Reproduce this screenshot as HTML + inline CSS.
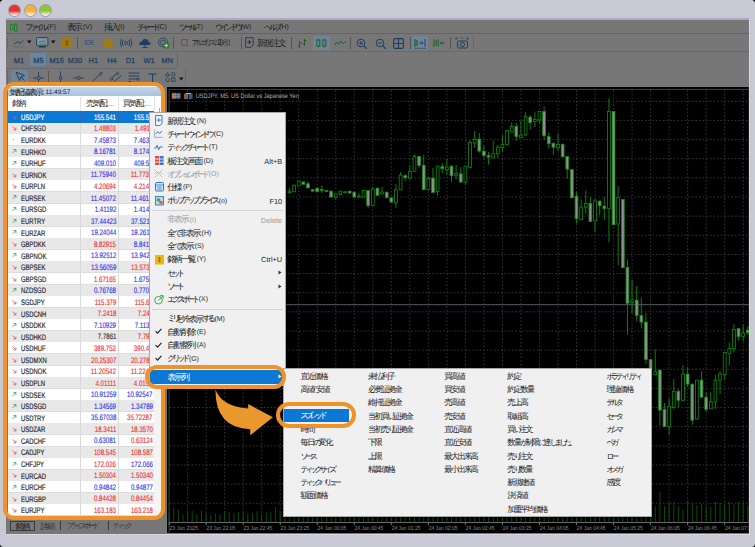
<!DOCTYPE html>
<html><head><meta charset="utf-8"><title>MT5</title>
<style>
html,body{margin:0;padding:0;}
body{width:755px;height:547px;overflow:hidden;position:relative;background:#000;font-family:"Liberation Sans",sans-serif;}
.r{position:absolute;}
.t{position:absolute;white-space:nowrap;line-height:1.2;text-rendering:geometricPrecision;font-family:"Liberation Sans",sans-serif;}
i.j{font-style:normal;display:inline-block;line-height:0;vertical-align:-0.1em;font-size:1.25em;width:0.8em;text-align:center;-webkit-text-stroke:0.05px currentColor;}
i.k{font-style:normal;display:inline-block;line-height:0;vertical-align:-0.1em;font-size:1.2em;width:0.6em;text-align:center;overflow:visible;-webkit-text-stroke:0.05px currentColor;}
svg{overflow:visible;}
text{text-rendering:geometricPrecision;}
</style></head><body>
<div class="r" style="left:0;top:0;width:755px;height:547px;background:#c9c9d6;border-radius:3.5px;"></div>
<div class="r" style="left:7.9px;top:3.9px;width:11px;height:11px;border-radius:50%;border:0.6px solid #9a9aa8;background:linear-gradient(#e8332e 0%, #e8332e 52%, #f6eee8 92%);"></div>
<div class="r" style="left:23.6px;top:3.9px;width:11px;height:11px;border-radius:50%;border:0.6px solid #9a9aa8;background:linear-gradient(#f4b030 0%, #f4b030 52%, #f6eee8 92%);"></div>
<div class="r" style="left:39.1px;top:3.9px;width:11px;height:11px;border-radius:50%;border:0.6px solid #9a9aa8;background:linear-gradient(#8cc63a 0%, #8cc63a 52%, #f6eee8 92%);"></div>
<div class="r" style="left:6px;top:18px;width:743px;height:2.2px;background:#aaaac2;"></div>
<div class="r" style="left:6px;top:20px;width:744.2px;height:515px;background:#d9d9e5;"></div>
<div class="r" style="left:6px;top:20px;width:743px;height:513.8px;background:#777777;"></div>
<div class="r" style="left:6px;top:33px;width:743px;height:0.8px;background:#636363;"></div>
<svg class="r" style="left:9px;top:21.5px" width="10" height="10" viewBox="0 0 10 10"><rect x="1.5" y="2.8" width="2.4" height="4.6" fill="#6a8a6a" stroke="#1a8a1a" stroke-width="1"/><path d="M2.7 1.7V2.8M2.7 7.4V8.6" stroke="#1a8a1a" stroke-width="0.9"/><rect x="5.5" y="2.8" width="2.4" height="6.3" fill="#6a8a6a" stroke="#1e7a2a" stroke-width="1"/><path d="M6.7 0.6V2.8M6.7 9.1V9.6" stroke="#1e7a2a" stroke-width="0.9"/></svg>
<div class="t " style="left:25px;top:24.03px;font-size:7.0px;color:#1e1e1e;"><i class="k">フ</i><i class="k">ァ</i><i class="k">イ</i><i class="k">ル</i> (F)</div>
<div class="t " style="left:67px;top:24.03px;font-size:7.0px;color:#1e1e1e;"><i class="j">表</i><i class="j">示</i> (V)</div>
<div class="t " style="left:104px;top:24.03px;font-size:7.0px;color:#1e1e1e;"><i class="j">挿</i><i class="j">入</i>(I)</div>
<div class="t " style="left:137px;top:24.03px;font-size:7.0px;color:#1e1e1e;"><i class="k">チ</i><i class="k">ャ</i><i class="k">ー</i><i class="k">ト</i>(C)</div>
<div class="t " style="left:179px;top:24.03px;font-size:7.0px;color:#1e1e1e;"><i class="k">ツ</i><i class="k">ー</i><i class="k">ル</i>(T)</div>
<div class="t " style="left:215px;top:24.03px;font-size:7.0px;color:#1e1e1e;"><i class="k">ウ</i><i class="k">イ</i><i class="k">ン</i><i class="k">ド</i><i class="k">ウ</i>(W)</div>
<div class="t " style="left:264px;top:24.03px;font-size:7.0px;color:#1e1e1e;"><i class="k">ヘ</i><i class="k">ル</i><i class="k">プ</i>(H)</div>
<div class="r" style="left:6px;top:50.5px;width:743px;height:0.8px;background:#6a6a6a;"></div>
<div class="r" style="left:6px;top:68px;width:171px;height:0.8px;background:#6a6a6a;"></div>
<div class="r" style="left:177px;top:51px;width:0.8px;height:17px;background:#6a6a6a;"></div>
<div class="r" style="left:185.3px;top:68.5px;width:0.8px;height:17px;background:#6a6a6a;"></div>
<div class="r" style="left:7.3px;top:37px;width:1px;height:0.8px;background:#5a5a5a;"></div>
<div class="r" style="left:7.3px;top:39px;width:1px;height:0.8px;background:#5a5a5a;"></div>
<div class="r" style="left:7.3px;top:41px;width:1px;height:0.8px;background:#5a5a5a;"></div>
<div class="r" style="left:7.3px;top:43px;width:1px;height:0.8px;background:#5a5a5a;"></div>
<div class="r" style="left:7.3px;top:45px;width:1px;height:0.8px;background:#5a5a5a;"></div>
<div class="r" style="left:7.3px;top:47px;width:1px;height:0.8px;background:#5a5a5a;"></div>
<svg class="r" style="left:13px;top:37px" width="11" height="11" viewBox="0 0 11 11"><path d="M1 1V10H10" fill="none" stroke="#666" stroke-width="0.8"/><path d="M2 7L4.5 4.5L7 6.5L10 3.5" fill="none" stroke="#1b3f63" stroke-width="1"/></svg>
<svg class="r" style="left:27px;top:40px" width="5" height="4" viewBox="0 0 5 4"><path d="M0 0.5H4.5L2.25 3.5Z" fill="#111"/></svg>
<svg class="r" style="left:35.5px;top:37px" width="12.5" height="11" viewBox="0 0 12.5 11"><rect x="0.6" y="0.6" width="11.3" height="8.3" rx="1" fill="#8596a6" stroke="#1b3f63" stroke-width="1"/><rect x="3" y="9" width="6.5" height="1.6" fill="#1b3f63"/><path d="M2.5 6L5 4L7 5L10 2.5" fill="none" stroke="#3b7a3b" stroke-width="0.8"/><path d="M3 8V7M5 8V6M7 8V6.5M9 8V5.5" stroke="#2f7a2f" stroke-width="0.9"/></svg>
<svg class="r" style="left:51px;top:40px" width="5" height="4" viewBox="0 0 5 4"><path d="M0 0.5H4.5L2.25 3.5Z" fill="#111"/></svg>
<svg class="r" style="left:62px;top:37.8px" width="10.5" height="9.8" viewBox="0 0 10.5 9.8"><rect x="0" y="0" width="10.2" height="9.6" rx="1.2" fill="#a07a10"/><path d="M5 2V8M3.5 3.5H6.5M3.5 6H6.5" stroke="#6a5008" stroke-width="0.8"/></svg>
<div class="r" style="left:77.3px;top:37px;width:0.8px;height:12px;background:#555;"></div>
<div class="t" style="left:84px;top:39px;font-size:7.4px;color:#2a5580;letter-spacing:-0.5px;transform:scaleX(0.9);transform-origin:0 0">IDE</div>
<svg class="r" style="left:103px;top:37px" width="10" height="11" viewBox="0 0 10 11"><path d="M3 4Q3 0.8 5 0.8Q7 0.8 7 4" fill="none" stroke="#a07a10" stroke-width="0.9"/><path d="M0.8 3.5H9.2L9.8 10.5H0.2Z" fill="#a07a10"/></svg>
<svg class="r" style="left:120px;top:38px" width="12" height="10" viewBox="0 0 12 10"><circle cx="6" cy="5" r="1.5" fill="none" stroke="#1b3f63" stroke-width="0.9"/><path d="M3.2 2Q1.5 5 3.2 8M8.8 2Q10.5 5 8.8 8M1.5 0.8Q-0.8 5 1.5 9.2M10.5 0.8Q12.8 5 10.5 9.2" fill="none" stroke="#1b3f63" stroke-width="0.9"/></svg>
<svg class="r" style="left:139px;top:37.5px" width="12" height="11" viewBox="0 0 12 11"><path d="M2.5 7Q0 7 0.5 5Q1 3.5 2.8 3.8Q3.5 0.8 6.5 1Q9.2 1.2 9.5 4Q11.8 4.2 11.5 6Q11.2 7 9.5 7Z" fill="#1b3f63"/><path d="M6 7V10M3.5 9.5H8.5" stroke="#1b3f63" stroke-width="0.9"/></svg>
<svg class="r" style="left:158px;top:37px" width="12" height="12" viewBox="0 0 12 12"><circle cx="5" cy="5.5" r="4.5" fill="none" stroke="#1b3f63" stroke-width="0.8"/><circle cx="5" cy="5.5" r="2.5" fill="none" stroke="#1b3f63" stroke-width="0.8"/><circle cx="8.3" cy="8.5" r="3.2" fill="#2f7a3a"/><path d="M8.3 6.7V10.3M6.5 8.5H10.1" stroke="#c8e0c8" stroke-width="0.9"/></svg>
<div class="r" style="left:173.3px;top:37px;width:0.8px;height:12px;background:#555;"></div>
<svg class="r" style="left:180.5px;top:39.2px" width="7" height="7" viewBox="0 0 7 7"><rect x="0.6" y="0.6" width="5.6" height="5.8" fill="none" stroke="#8a4530" stroke-width="1"/></svg>
<div class="t " style="left:191.8px;top:40.61px;font-size:6.0px;color:#262626;"><i class="k">ア</i><i class="k">ル</i><i class="k">ゴ</i><i class="k">リ</i><i class="k">ズ</i><i class="k">ム</i><i class="j">取</i><i class="j">引</i></div>
<div class="r" style="left:240.5px;top:37px;width:0.8px;height:12px;background:#555;"></div>
<svg class="r" style="left:245px;top:37.3px" width="9" height="11" viewBox="0 0 9 11"><path d="M0.6 0.6H8.2V8L6 10.4H0.6Z" fill="none" stroke="#1b3f63" stroke-width="0.9"/><path d="M4.4 3V7M2.4 5H6.4" stroke="#222" stroke-width="0.8"/></svg>
<div class="t " style="left:257px;top:40.03px;font-size:7.0px;color:#262626;"><i class="j">新</i><i class="j">規</i><i class="j">注</i><i class="j">文</i></div>
<div class="r" style="left:290.5px;top:37px;width:0.8px;height:12px;background:#555;"></div>
<svg class="r" style="left:297px;top:37.5px" width="10" height="11" viewBox="0 0 10 11"><path d="M2.5 3V10M0.5 8H2.5M2.5 5H4.5M7.5 1V8M5.5 6H7.5M7.5 2.5H9.5" stroke="#1c6224" stroke-width="1"/></svg>
<div class="r" style="left:313px;top:36px;width:17px;height:14px;background:#6f8497;border-radius:1px;"></div>
<svg class="r" style="left:315px;top:38px" width="13" height="10" viewBox="0 0 13 10"><rect x="1.8" y="2" width="3" height="6" fill="none" stroke="#1c6224" stroke-width="1"/><rect x="7.8" y="2" width="3" height="6" fill="none" stroke="#1c6224" stroke-width="1"/><path d="M3.3 0.5V2M3.3 8V9.5M9.3 0.5V2M9.3 8V9.5" stroke="#1c6224" stroke-width="0.9"/></svg>
<svg class="r" style="left:334px;top:39px" width="12" height="8" viewBox="0 0 12 8"><path d="M0.5 6L2.5 3L4.5 5.5L6.5 2L8.5 4.5L11.5 3" fill="none" stroke="#1c6224" stroke-width="1"/></svg>
<div class="r" style="left:349.8px;top:37px;width:0.8px;height:12px;background:#555;"></div>
<svg class="r" style="left:355.5px;top:37.5px" width="12" height="12" viewBox="0 0 12 12"><circle cx="5" cy="5" r="3.8" fill="none" stroke="#1b3f63" stroke-width="1"/><path d="M7.8 7.8L10.8 10.8" stroke="#1b3f63" stroke-width="1.2"/><path d="M3 5H7" stroke="#1b3f63" stroke-width="0.9"/><path d="M5 3V7" stroke="#1b3f63" stroke-width="0.9"/></svg>
<svg class="r" style="left:374.5px;top:37.5px" width="12" height="12" viewBox="0 0 12 12"><circle cx="5" cy="5" r="3.8" fill="none" stroke="#1b3f63" stroke-width="1"/><path d="M7.8 7.8L10.8 10.8" stroke="#1b3f63" stroke-width="1.2"/><path d="M3 5H7" stroke="#1b3f63" stroke-width="0.9"/></svg>
<svg class="r" style="left:393px;top:37.5px" width="11" height="11" viewBox="0 0 11 11"><rect x="0.6" y="0.6" width="9.8" height="9.8" rx="1.5" fill="none" stroke="#1b3f63" stroke-width="1.1"/><path d="M5.5 0.6V10.4M0.6 5.5H10.4" stroke="#1b3f63" stroke-width="1.1"/></svg>
<div class="r" style="left:409.8px;top:37px;width:0.8px;height:12px;background:#555;"></div>
<div class="r" style="left:411.5px;top:36px;width:16px;height:14px;background:#6f8497;border-radius:1px;"></div>
<svg class="r" style="left:412.5px;top:37.5px" width="14" height="11" viewBox="0 0 14 11"><path d="M2 1V9M4 2V8" stroke="#1c6224" stroke-width="1.2"/><path d="M6 5H10M8.5 3.5L10 5L8.5 6.5M12 1V9" fill="none" stroke="#1b3f63" stroke-width="0.9"/><path d="M1 10.3H13" stroke="#1b3f63" stroke-width="0.6"/></svg>
<svg class="r" style="left:432px;top:37.5px" width="14" height="11" viewBox="0 0 14 11"><path d="M2 1V9M4.2 2V8M6.2 1.5V8.5" stroke="#1c6224" stroke-width="1"/><path d="M12.5 5H8.5M10 3.5L8.5 5L10 6.5" fill="none" stroke="#1b3f63" stroke-width="0.9"/></svg>
<div class="r" style="left:449.5px;top:37px;width:0.8px;height:12px;background:#555;"></div>
<svg class="r" style="left:455px;top:37px" width="15" height="12" viewBox="0 0 15 12"><path d="M1 3V1H3M6 1H8M11 1H13V3" fill="none" stroke="#1b3f63" stroke-width="0.8"/><rect x="2.5" y="4" width="10" height="7" rx="1.2" fill="none" stroke="#1b3f63" stroke-width="1"/><circle cx="7.5" cy="7.5" r="2" fill="none" stroke="#1b3f63" stroke-width="1"/></svg>
<div class="r" style="left:473px;top:35px;width:0.8px;height:15px;background:#6a6a6a;"></div>
<div class="r" style="left:29px;top:52.3px;width:17.5px;height:15px;background:#71859a;border-radius:2px;border:0.6px solid #62778e;box-sizing:border-box;"></div>
<div class="t" style="left:4px;width:30px;text-align:center;top:56.5px;font-size:7.4px;color:#1b3f63;-webkit-text-stroke:0.25px #1b3f63">M1</div>
<div class="t" style="left:23.4px;width:30px;text-align:center;top:56.5px;font-size:7.4px;color:#1b3f63;-webkit-text-stroke:0.25px #1b3f63">M5</div>
<div class="t" style="left:41.6px;width:30px;text-align:center;top:56.5px;font-size:7.4px;color:#1b3f63;-webkit-text-stroke:0.25px #1b3f63">M15</div>
<div class="t" style="left:60px;width:30px;text-align:center;top:56.5px;font-size:7.4px;color:#1b3f63;-webkit-text-stroke:0.25px #1b3f63">M30</div>
<div class="t" style="left:78.3px;width:30px;text-align:center;top:56.5px;font-size:7.4px;color:#1b3f63;-webkit-text-stroke:0.25px #1b3f63">H1</div>
<div class="t" style="left:97px;width:30px;text-align:center;top:56.5px;font-size:7.4px;color:#1b3f63;-webkit-text-stroke:0.25px #1b3f63">H4</div>
<div class="t" style="left:115.4px;width:30px;text-align:center;top:56.5px;font-size:7.4px;color:#1b3f63;-webkit-text-stroke:0.25px #1b3f63">D1</div>
<div class="t" style="left:134px;width:30px;text-align:center;top:56.5px;font-size:7.4px;color:#1b3f63;-webkit-text-stroke:0.25px #1b3f63">W1</div>
<div class="t" style="left:152.3px;width:30px;text-align:center;top:56.5px;font-size:7.4px;color:#1b3f63;-webkit-text-stroke:0.25px #1b3f63">MN</div>
<div class="r" style="left:7.3px;top:71px;width:1px;height:0.8px;background:#5a5a5a;"></div>
<div class="r" style="left:7.3px;top:73px;width:1px;height:0.8px;background:#5a5a5a;"></div>
<div class="r" style="left:7.3px;top:75px;width:1px;height:0.8px;background:#5a5a5a;"></div>
<div class="r" style="left:7.3px;top:77px;width:1px;height:0.8px;background:#5a5a5a;"></div>
<div class="r" style="left:7.3px;top:79px;width:1px;height:0.8px;background:#5a5a5a;"></div>
<div class="r" style="left:7.3px;top:81px;width:1px;height:0.8px;background:#5a5a5a;"></div>
<div class="r" style="left:7.3px;top:83px;width:1px;height:0.8px;background:#5a5a5a;"></div>
<div class="r" style="left:10.8px;top:70.3px;width:17.2px;height:12.5px;background:#6f8497;border-radius:1px;"></div>
<svg class="r" style="left:15px;top:71px" width="11" height="11" viewBox="0 0 11 11"><path d="M1 1L9.5 4.5L6 6L4.5 9.5Z" fill="none" stroke="#1b3f63" stroke-width="1"/><path d="M6 6L9.5 9.5" stroke="#1b3f63" stroke-width="1"/></svg>
<svg class="r" style="left:33px;top:70.5px" width="11" height="12" viewBox="0 0 11 12"><path d="M0 7H11M5.5 1V12" stroke="#1b3f63" stroke-width="0.9"/><circle cx="5.5" cy="7" r="1.6" fill="#777" stroke="#1b3f63" stroke-width="0.9"/></svg>
<div class="r" style="left:48.2px;top:71px;width:0.8px;height:12px;background:#555;"></div>
<svg class="r" style="left:57px;top:70.5px" width="7" height="12" viewBox="0 0 7 12"><path d="M3.5 0.5V12" stroke="#1b3f63" stroke-width="0.9"/><circle cx="3.5" cy="7" r="1.5" fill="#777" stroke="#1b3f63" stroke-width="0.9"/></svg>
<svg class="r" style="left:73px;top:71px" width="11" height="11" viewBox="0 0 11 11"><path d="M0 7H11" stroke="#1b3f63" stroke-width="0.9"/><circle cx="5.5" cy="7" r="1.6" fill="#777" stroke="#1b3f63" stroke-width="0.9"/></svg>
<svg class="r" style="left:92px;top:72px" width="11" height="10" viewBox="0 0 11 10"><path d="M0.5 9.5L8.5 1.8" stroke="#1b3f63" stroke-width="0.9"/><circle cx="9" cy="1.6" r="1.3" fill="#777" stroke="#1b3f63" stroke-width="0.8"/></svg>
<svg class="r" style="left:110px;top:72px" width="12" height="10" viewBox="0 0 12 10"><path d="M1 6.5L7 1.5M4 9.5L11.5 3.5" stroke="#1b3f63" stroke-width="0.9"/><circle cx="7.5" cy="1.5" r="1.2" fill="#777" stroke="#1b3f63" stroke-width="0.8"/><circle cx="1.5" cy="7" r="1.2" fill="#777" stroke="#1b3f63" stroke-width="0.8"/></svg>
<svg class="r" style="left:128px;top:72px" width="12" height="10" viewBox="0 0 12 10"><path d="M0.5 1H11.5M0.5 4H11.5M0.5 7H9M0.5 9.5H3" stroke="#1b3f63" stroke-width="0.9"/><circle cx="10" cy="7" r="1.2" fill="#777" stroke="#1b3f63" stroke-width="0.8"/></svg>
<svg class="r" style="left:148px;top:72.5px" width="9" height="9" viewBox="0 0 9 9"><path d="M0.5 1H8.5M4.5 1V9" stroke="#1b3f63" stroke-width="1"/></svg>
<svg class="r" style="left:164.5px;top:72px" width="11" height="10" viewBox="0 0 11 10"><path d="M2.5 0.5L4.5 3.8H0.5Z" fill="none" stroke="#1b3f63" stroke-width="0.8"/><rect x="6.5" y="0.5" width="3.5" height="3.5" rx="1.7" fill="none" stroke="#1b3f63" stroke-width="0.8"/><path d="M0.5 7.5L2.5 5.8L4.5 7.5L3.7 9.5H1.3Z" fill="none" stroke="#1b3f63" stroke-width="0.8"/><rect x="6.5" y="6" width="3.5" height="3.5" fill="none" stroke="#1b3f63" stroke-width="0.8"/></svg>
<svg class="r" style="left:179px;top:77px" width="5" height="4" viewBox="0 0 5 4"><path d="M0 0.5H4.5L2.25 3.5Z" fill="#111"/></svg>
<div class="r" style="left:9.5px;top:520.5px;width:25.5px;height:10.5px;background:#777;border:0.8px solid #3a3a3a;box-sizing:border-box;"></div>
<div class="t " style="left:15.6px;top:522.86px;font-size:6.6px;color:#1e1e1e;"><i class="j">銘</i><i class="j">柄</i></div>
<div class="t " style="left:40.5px;top:522.86px;font-size:6.6px;color:#3a3a3a;"><i class="j">詳</i><i class="j">細</i></div>
<div class="r" style="left:60.2px;top:521px;width:0.8px;height:9px;background:#3a3a3a;"></div>
<div class="t " style="left:66.4px;top:523.21px;font-size:6.0px;color:#3a3a3a;"><i class="k">プ</i><i class="k">ラ</i><i class="k">イ</i><i class="k">ス</i><i class="k">ボ</i><i class="k">ー</i><i class="k">ド</i></div>
<div class="r" style="left:107.5px;top:521px;width:0.8px;height:9px;background:#3a3a3a;"></div>
<div class="t " style="left:112.6px;top:523.21px;font-size:6.0px;color:#3a3a3a;"><i class="k">テ</i><i class="k">ィ</i><i class="k">ッ</i><i class="k">ク</i></div>
<svg class="r" style="left:167.2px;top:86.9px;overflow:hidden" width="581.8" height="446.6" viewBox="0 0 581.8 446.6"><rect x="0" y="0" width="581.8" height="446.6" fill="#000"/><path d="M2.10 446.6V2.40H581.8" fill="none" stroke="#4a4a4a" stroke-width="0.9"/><line x1="2.80" y1="14.30" x2="581.8" y2="14.30" stroke="#3c3c3c" stroke-width="0.9" stroke-dasharray="1.6 2"/><line x1="2.80" y1="33.44" x2="581.8" y2="33.44" stroke="#3c3c3c" stroke-width="0.9" stroke-dasharray="1.6 2"/><line x1="2.80" y1="52.58" x2="581.8" y2="52.58" stroke="#3c3c3c" stroke-width="0.9" stroke-dasharray="1.6 2"/><line x1="2.80" y1="71.72" x2="581.8" y2="71.72" stroke="#3c3c3c" stroke-width="0.9" stroke-dasharray="1.6 2"/><line x1="2.80" y1="90.86" x2="581.8" y2="90.86" stroke="#3c3c3c" stroke-width="0.9" stroke-dasharray="1.6 2"/><line x1="2.80" y1="110.00" x2="581.8" y2="110.00" stroke="#3c3c3c" stroke-width="0.9" stroke-dasharray="1.6 2"/><line x1="2.80" y1="129.14" x2="581.8" y2="129.14" stroke="#3c3c3c" stroke-width="0.9" stroke-dasharray="1.6 2"/><line x1="2.80" y1="148.28" x2="581.8" y2="148.28" stroke="#3c3c3c" stroke-width="0.9" stroke-dasharray="1.6 2"/><line x1="2.80" y1="167.42" x2="581.8" y2="167.42" stroke="#3c3c3c" stroke-width="0.9" stroke-dasharray="1.6 2"/><line x1="2.80" y1="186.56" x2="581.8" y2="186.56" stroke="#3c3c3c" stroke-width="0.9" stroke-dasharray="1.6 2"/><line x1="2.80" y1="205.70" x2="581.8" y2="205.70" stroke="#3c3c3c" stroke-width="0.9" stroke-dasharray="1.6 2"/><line x1="2.80" y1="224.84" x2="581.8" y2="224.84" stroke="#3c3c3c" stroke-width="0.9" stroke-dasharray="1.6 2"/><line x1="2.80" y1="243.98" x2="581.8" y2="243.98" stroke="#3c3c3c" stroke-width="0.9" stroke-dasharray="1.6 2"/><line x1="2.80" y1="263.12" x2="581.8" y2="263.12" stroke="#3c3c3c" stroke-width="0.9" stroke-dasharray="1.6 2"/><line x1="2.80" y1="282.26" x2="581.8" y2="282.26" stroke="#3c3c3c" stroke-width="0.9" stroke-dasharray="1.6 2"/><line x1="2.80" y1="301.40" x2="581.8" y2="301.40" stroke="#3c3c3c" stroke-width="0.9" stroke-dasharray="1.6 2"/><line x1="2.80" y1="320.54" x2="581.8" y2="320.54" stroke="#3c3c3c" stroke-width="0.9" stroke-dasharray="1.6 2"/><line x1="2.80" y1="339.68" x2="581.8" y2="339.68" stroke="#3c3c3c" stroke-width="0.9" stroke-dasharray="1.6 2"/><line x1="2.80" y1="358.82" x2="581.8" y2="358.82" stroke="#3c3c3c" stroke-width="0.9" stroke-dasharray="1.6 2"/><line x1="2.80" y1="377.96" x2="581.8" y2="377.96" stroke="#3c3c3c" stroke-width="0.9" stroke-dasharray="1.6 2"/><line x1="2.80" y1="397.10" x2="581.8" y2="397.10" stroke="#3c3c3c" stroke-width="0.9" stroke-dasharray="1.6 2"/><line x1="2.80" y1="416.24" x2="581.8" y2="416.24" stroke="#3c3c3c" stroke-width="0.9" stroke-dasharray="1.6 2"/><line x1="20.60" y1="3.10" x2="20.60" y2="435.10" stroke="#3c3c3c" stroke-width="0.9" stroke-dasharray="1.6 2"/><line x1="39.12" y1="3.10" x2="39.12" y2="435.10" stroke="#3c3c3c" stroke-width="0.9" stroke-dasharray="1.6 2"/><line x1="57.64" y1="3.10" x2="57.64" y2="435.10" stroke="#3c3c3c" stroke-width="0.9" stroke-dasharray="1.6 2"/><line x1="76.16" y1="3.10" x2="76.16" y2="435.10" stroke="#3c3c3c" stroke-width="0.9" stroke-dasharray="1.6 2"/><line x1="94.68" y1="3.10" x2="94.68" y2="435.10" stroke="#3c3c3c" stroke-width="0.9" stroke-dasharray="1.6 2"/><line x1="113.20" y1="3.10" x2="113.20" y2="435.10" stroke="#3c3c3c" stroke-width="0.9" stroke-dasharray="1.6 2"/><line x1="131.72" y1="3.10" x2="131.72" y2="435.10" stroke="#3c3c3c" stroke-width="0.9" stroke-dasharray="1.6 2"/><line x1="150.24" y1="3.10" x2="150.24" y2="435.10" stroke="#3c3c3c" stroke-width="0.9" stroke-dasharray="1.6 2"/><line x1="168.76" y1="3.10" x2="168.76" y2="435.10" stroke="#3c3c3c" stroke-width="0.9" stroke-dasharray="1.6 2"/><line x1="187.28" y1="3.10" x2="187.28" y2="435.10" stroke="#3c3c3c" stroke-width="0.9" stroke-dasharray="1.6 2"/><line x1="205.80" y1="3.10" x2="205.80" y2="435.10" stroke="#3c3c3c" stroke-width="0.9" stroke-dasharray="1.6 2"/><line x1="224.32" y1="3.10" x2="224.32" y2="435.10" stroke="#3c3c3c" stroke-width="0.9" stroke-dasharray="1.6 2"/><line x1="242.84" y1="3.10" x2="242.84" y2="435.10" stroke="#3c3c3c" stroke-width="0.9" stroke-dasharray="1.6 2"/><line x1="261.36" y1="3.10" x2="261.36" y2="435.10" stroke="#3c3c3c" stroke-width="0.9" stroke-dasharray="1.6 2"/><line x1="279.88" y1="3.10" x2="279.88" y2="435.10" stroke="#3c3c3c" stroke-width="0.9" stroke-dasharray="1.6 2"/><line x1="298.40" y1="3.10" x2="298.40" y2="435.10" stroke="#3c3c3c" stroke-width="0.9" stroke-dasharray="1.6 2"/><line x1="316.92" y1="3.10" x2="316.92" y2="435.10" stroke="#3c3c3c" stroke-width="0.9" stroke-dasharray="1.6 2"/><line x1="335.44" y1="3.10" x2="335.44" y2="435.10" stroke="#3c3c3c" stroke-width="0.9" stroke-dasharray="1.6 2"/><line x1="353.96" y1="3.10" x2="353.96" y2="435.10" stroke="#3c3c3c" stroke-width="0.9" stroke-dasharray="1.6 2"/><line x1="372.48" y1="3.10" x2="372.48" y2="435.10" stroke="#3c3c3c" stroke-width="0.9" stroke-dasharray="1.6 2"/><line x1="391.00" y1="3.10" x2="391.00" y2="435.10" stroke="#3c3c3c" stroke-width="0.9" stroke-dasharray="1.6 2"/><line x1="409.52" y1="3.10" x2="409.52" y2="435.10" stroke="#3c3c3c" stroke-width="0.9" stroke-dasharray="1.6 2"/><line x1="428.04" y1="3.10" x2="428.04" y2="435.10" stroke="#3c3c3c" stroke-width="0.9" stroke-dasharray="1.6 2"/><line x1="446.56" y1="3.10" x2="446.56" y2="435.10" stroke="#3c3c3c" stroke-width="0.9" stroke-dasharray="1.6 2"/><line x1="465.08" y1="3.10" x2="465.08" y2="435.10" stroke="#3c3c3c" stroke-width="0.9" stroke-dasharray="1.6 2"/><line x1="483.60" y1="3.10" x2="483.60" y2="435.10" stroke="#3c3c3c" stroke-width="0.9" stroke-dasharray="1.6 2"/><line x1="502.12" y1="3.10" x2="502.12" y2="435.10" stroke="#3c3c3c" stroke-width="0.9" stroke-dasharray="1.6 2"/><line x1="520.64" y1="3.10" x2="520.64" y2="435.10" stroke="#3c3c3c" stroke-width="0.9" stroke-dasharray="1.6 2"/><line x1="539.16" y1="3.10" x2="539.16" y2="435.10" stroke="#3c3c3c" stroke-width="0.9" stroke-dasharray="1.6 2"/><line x1="557.68" y1="3.10" x2="557.68" y2="435.10" stroke="#3c3c3c" stroke-width="0.9" stroke-dasharray="1.6 2"/><line x1="576.20" y1="3.10" x2="576.20" y2="435.10" stroke="#3c3c3c" stroke-width="0.9" stroke-dasharray="1.6 2"/><line x1="2.80" y1="217.70" x2="581.8" y2="217.70" stroke="#5d6670" stroke-width="0.9"/><line x1="2.10" y1="435.50" x2="581.8" y2="435.50" stroke="#8a8a8a" stroke-width="0.8"/><line x1="2.10" y1="435.50" x2="2.10" y2="438.10" stroke="#8a8a8a" stroke-width="0.8"/><text x="2.40" y="443.10" font-size="5.8" fill="#8c8c8c" font-family="Liberation Sans" textLength="28.8" lengthAdjust="spacingAndGlyphs">23 Jan 2025</text><line x1="39.14" y1="435.50" x2="39.14" y2="438.10" stroke="#8a8a8a" stroke-width="0.8"/><text x="39.44" y="443.10" font-size="5.8" fill="#8c8c8c" font-family="Liberation Sans" textLength="28.8" lengthAdjust="spacingAndGlyphs">23 Jan 22:05</text><line x1="76.18" y1="435.50" x2="76.18" y2="438.10" stroke="#8a8a8a" stroke-width="0.8"/><text x="76.48" y="443.10" font-size="5.8" fill="#8c8c8c" font-family="Liberation Sans" textLength="28.8" lengthAdjust="spacingAndGlyphs">23 Jan 22:45</text><line x1="113.22" y1="435.50" x2="113.22" y2="438.10" stroke="#8a8a8a" stroke-width="0.8"/><text x="113.52" y="443.10" font-size="5.8" fill="#8c8c8c" font-family="Liberation Sans" textLength="28.8" lengthAdjust="spacingAndGlyphs">23 Jan 23:25</text><line x1="150.26" y1="435.50" x2="150.26" y2="438.10" stroke="#8a8a8a" stroke-width="0.8"/><text x="150.56" y="443.10" font-size="5.8" fill="#8c8c8c" font-family="Liberation Sans" textLength="28.8" lengthAdjust="spacingAndGlyphs">24 Jan 00:05</text><line x1="187.30" y1="435.50" x2="187.30" y2="438.10" stroke="#8a8a8a" stroke-width="0.8"/><text x="187.60" y="443.10" font-size="5.8" fill="#8c8c8c" font-family="Liberation Sans" textLength="28.8" lengthAdjust="spacingAndGlyphs">24 Jan 00:45</text><line x1="224.34" y1="435.50" x2="224.34" y2="438.10" stroke="#8a8a8a" stroke-width="0.8"/><text x="224.64" y="443.10" font-size="5.8" fill="#8c8c8c" font-family="Liberation Sans" textLength="28.8" lengthAdjust="spacingAndGlyphs">24 Jan 01:25</text><line x1="261.38" y1="435.50" x2="261.38" y2="438.10" stroke="#8a8a8a" stroke-width="0.8"/><text x="261.68" y="443.10" font-size="5.8" fill="#8c8c8c" font-family="Liberation Sans" textLength="28.8" lengthAdjust="spacingAndGlyphs">24 Jan 02:05</text><line x1="298.42" y1="435.50" x2="298.42" y2="438.10" stroke="#8a8a8a" stroke-width="0.8"/><text x="298.72" y="443.10" font-size="5.8" fill="#8c8c8c" font-family="Liberation Sans" textLength="28.8" lengthAdjust="spacingAndGlyphs">24 Jan 02:45</text><line x1="335.46" y1="435.50" x2="335.46" y2="438.10" stroke="#8a8a8a" stroke-width="0.8"/><text x="335.76" y="443.10" font-size="5.8" fill="#8c8c8c" font-family="Liberation Sans" textLength="28.8" lengthAdjust="spacingAndGlyphs">24 Jan 03:25</text><line x1="372.50" y1="435.50" x2="372.50" y2="438.10" stroke="#8a8a8a" stroke-width="0.8"/><text x="372.80" y="443.10" font-size="5.8" fill="#8c8c8c" font-family="Liberation Sans" textLength="28.8" lengthAdjust="spacingAndGlyphs">24 Jan 04:05</text><line x1="409.54" y1="435.50" x2="409.54" y2="438.10" stroke="#8a8a8a" stroke-width="0.8"/><text x="409.84" y="443.10" font-size="5.8" fill="#8c8c8c" font-family="Liberation Sans" textLength="28.8" lengthAdjust="spacingAndGlyphs">24 Jan 04:45</text><line x1="446.58" y1="435.50" x2="446.58" y2="438.10" stroke="#8a8a8a" stroke-width="0.8"/><text x="446.88" y="443.10" font-size="5.8" fill="#8c8c8c" font-family="Liberation Sans" textLength="28.8" lengthAdjust="spacingAndGlyphs">24 Jan 05:25</text><line x1="483.62" y1="435.50" x2="483.62" y2="438.10" stroke="#8a8a8a" stroke-width="0.8"/><text x="483.92" y="443.10" font-size="5.8" fill="#8c8c8c" font-family="Liberation Sans" textLength="28.8" lengthAdjust="spacingAndGlyphs">24 Jan 06:05</text><line x1="520.66" y1="435.50" x2="520.66" y2="438.10" stroke="#8a8a8a" stroke-width="0.8"/><text x="520.96" y="443.10" font-size="5.8" fill="#8c8c8c" font-family="Liberation Sans" textLength="28.8" lengthAdjust="spacingAndGlyphs">24 Jan 06:45</text><line x1="557.70" y1="435.50" x2="557.70" y2="438.10" stroke="#8a8a8a" stroke-width="0.8"/><text x="558.00" y="443.10" font-size="5.8" fill="#8c8c8c" font-family="Liberation Sans" textLength="28.8" lengthAdjust="spacingAndGlyphs">24 Jan 07:25</text><line x1="2.08" y1="435.10" x2="2.08" y2="426.48" stroke="#0c5e0c" stroke-width="0.8"/><line x1="6.71" y1="435.10" x2="6.71" y2="421.24" stroke="#0c5e0c" stroke-width="0.8"/><line x1="11.34" y1="435.10" x2="11.34" y2="422.75" stroke="#0c5e0c" stroke-width="0.8"/><line x1="15.97" y1="435.10" x2="15.97" y2="427.91" stroke="#0c5e0c" stroke-width="0.8"/><line x1="20.60" y1="435.10" x2="20.60" y2="424.48" stroke="#0c5e0c" stroke-width="0.8"/><line x1="25.23" y1="435.10" x2="25.23" y2="423.97" stroke="#0c5e0c" stroke-width="0.8"/><line x1="29.86" y1="435.10" x2="29.86" y2="426.98" stroke="#0c5e0c" stroke-width="0.8"/><line x1="34.49" y1="435.10" x2="34.49" y2="423.36" stroke="#0c5e0c" stroke-width="0.8"/><line x1="39.12" y1="435.10" x2="39.12" y2="426.12" stroke="#0c5e0c" stroke-width="0.8"/><line x1="43.75" y1="435.10" x2="43.75" y2="427.87" stroke="#0c5e0c" stroke-width="0.8"/><line x1="48.38" y1="435.10" x2="48.38" y2="426.65" stroke="#0c5e0c" stroke-width="0.8"/><line x1="53.01" y1="435.10" x2="53.01" y2="427.51" stroke="#0c5e0c" stroke-width="0.8"/><line x1="57.64" y1="435.10" x2="57.64" y2="424.02" stroke="#0c5e0c" stroke-width="0.8"/><line x1="62.27" y1="435.10" x2="62.27" y2="425.19" stroke="#0c5e0c" stroke-width="0.8"/><line x1="66.90" y1="435.10" x2="66.90" y2="426.24" stroke="#0c5e0c" stroke-width="0.8"/><line x1="71.53" y1="435.10" x2="71.53" y2="425.17" stroke="#0c5e0c" stroke-width="0.8"/><line x1="76.16" y1="435.10" x2="76.16" y2="424.70" stroke="#0c5e0c" stroke-width="0.8"/><line x1="80.79" y1="435.10" x2="80.79" y2="426.53" stroke="#0c5e0c" stroke-width="0.8"/><line x1="85.42" y1="435.10" x2="85.42" y2="425.83" stroke="#0c5e0c" stroke-width="0.8"/><line x1="90.05" y1="435.10" x2="90.05" y2="424.13" stroke="#0c5e0c" stroke-width="0.8"/><line x1="94.68" y1="435.10" x2="94.68" y2="426.88" stroke="#0c5e0c" stroke-width="0.8"/><line x1="99.31" y1="435.10" x2="99.31" y2="425.47" stroke="#0c5e0c" stroke-width="0.8"/><line x1="103.94" y1="435.10" x2="103.94" y2="424.45" stroke="#0c5e0c" stroke-width="0.8"/><line x1="108.57" y1="435.10" x2="108.57" y2="419.94" stroke="#0c5e0c" stroke-width="0.8"/><line x1="113.20" y1="435.10" x2="113.20" y2="424.31" stroke="#0c5e0c" stroke-width="0.8"/><line x1="117.83" y1="435.10" x2="117.83" y2="421.65" stroke="#0c5e0c" stroke-width="0.8"/><line x1="122.46" y1="435.10" x2="122.46" y2="424.28" stroke="#0c5e0c" stroke-width="0.8"/><line x1="127.09" y1="435.10" x2="127.09" y2="423.72" stroke="#0c5e0c" stroke-width="0.8"/><line x1="131.72" y1="435.10" x2="131.72" y2="424.62" stroke="#0c5e0c" stroke-width="0.8"/><line x1="136.35" y1="435.10" x2="136.35" y2="425.20" stroke="#0c5e0c" stroke-width="0.8"/><line x1="140.98" y1="435.10" x2="140.98" y2="423.90" stroke="#0c5e0c" stroke-width="0.8"/><line x1="145.61" y1="435.10" x2="145.61" y2="425.73" stroke="#0c5e0c" stroke-width="0.8"/><line x1="150.24" y1="435.10" x2="150.24" y2="427.80" stroke="#0c5e0c" stroke-width="0.8"/><line x1="154.87" y1="435.10" x2="154.87" y2="424.86" stroke="#0c5e0c" stroke-width="0.8"/><line x1="159.50" y1="435.10" x2="159.50" y2="423.99" stroke="#0c5e0c" stroke-width="0.8"/><line x1="164.13" y1="435.10" x2="164.13" y2="426.17" stroke="#0c5e0c" stroke-width="0.8"/><line x1="168.76" y1="435.10" x2="168.76" y2="427.99" stroke="#0c5e0c" stroke-width="0.8"/><line x1="173.39" y1="435.10" x2="173.39" y2="425.08" stroke="#0c5e0c" stroke-width="0.8"/><line x1="178.02" y1="435.10" x2="178.02" y2="424.26" stroke="#0c5e0c" stroke-width="0.8"/><line x1="182.65" y1="435.10" x2="182.65" y2="426.86" stroke="#0c5e0c" stroke-width="0.8"/><line x1="187.28" y1="435.10" x2="187.28" y2="420.40" stroke="#0c5e0c" stroke-width="0.8"/><line x1="191.91" y1="435.10" x2="191.91" y2="425.35" stroke="#0c5e0c" stroke-width="0.8"/><line x1="196.54" y1="435.10" x2="196.54" y2="424.00" stroke="#0c5e0c" stroke-width="0.8"/><line x1="201.17" y1="435.10" x2="201.17" y2="426.71" stroke="#0c5e0c" stroke-width="0.8"/><line x1="205.80" y1="435.10" x2="205.80" y2="426.31" stroke="#0c5e0c" stroke-width="0.8"/><line x1="210.43" y1="435.10" x2="210.43" y2="423.31" stroke="#0c5e0c" stroke-width="0.8"/><line x1="215.06" y1="435.10" x2="215.06" y2="427.22" stroke="#0c5e0c" stroke-width="0.8"/><line x1="219.69" y1="435.10" x2="219.69" y2="426.93" stroke="#0c5e0c" stroke-width="0.8"/><line x1="224.32" y1="435.10" x2="224.32" y2="425.15" stroke="#0c5e0c" stroke-width="0.8"/><line x1="228.95" y1="435.10" x2="228.95" y2="428.08" stroke="#0c5e0c" stroke-width="0.8"/><line x1="233.58" y1="435.10" x2="233.58" y2="426.25" stroke="#0c5e0c" stroke-width="0.8"/><line x1="238.21" y1="435.10" x2="238.21" y2="423.33" stroke="#0c5e0c" stroke-width="0.8"/><line x1="242.84" y1="435.10" x2="242.84" y2="425.52" stroke="#0c5e0c" stroke-width="0.8"/><line x1="247.47" y1="435.10" x2="247.47" y2="420.02" stroke="#0c5e0c" stroke-width="0.8"/><line x1="252.10" y1="435.10" x2="252.10" y2="424.20" stroke="#0c5e0c" stroke-width="0.8"/><line x1="256.73" y1="435.10" x2="256.73" y2="424.11" stroke="#0c5e0c" stroke-width="0.8"/><line x1="261.36" y1="435.10" x2="261.36" y2="422.20" stroke="#0c5e0c" stroke-width="0.8"/><line x1="265.99" y1="435.10" x2="265.99" y2="425.16" stroke="#0c5e0c" stroke-width="0.8"/><line x1="270.62" y1="435.10" x2="270.62" y2="427.29" stroke="#0c5e0c" stroke-width="0.8"/><line x1="275.25" y1="435.10" x2="275.25" y2="425.38" stroke="#0c5e0c" stroke-width="0.8"/><line x1="279.88" y1="435.10" x2="279.88" y2="427.59" stroke="#0c5e0c" stroke-width="0.8"/><line x1="284.51" y1="435.10" x2="284.51" y2="427.97" stroke="#0c5e0c" stroke-width="0.8"/><line x1="289.14" y1="435.10" x2="289.14" y2="425.03" stroke="#0c5e0c" stroke-width="0.8"/><line x1="293.77" y1="435.10" x2="293.77" y2="426.84" stroke="#0c5e0c" stroke-width="0.8"/><line x1="298.40" y1="435.10" x2="298.40" y2="426.28" stroke="#0c5e0c" stroke-width="0.8"/><line x1="303.03" y1="435.10" x2="303.03" y2="423.86" stroke="#0c5e0c" stroke-width="0.8"/><line x1="307.66" y1="435.10" x2="307.66" y2="425.77" stroke="#0c5e0c" stroke-width="0.8"/><line x1="312.29" y1="435.10" x2="312.29" y2="424.64" stroke="#0c5e0c" stroke-width="0.8"/><line x1="316.92" y1="435.10" x2="316.92" y2="426.78" stroke="#0c5e0c" stroke-width="0.8"/><line x1="321.55" y1="435.10" x2="321.55" y2="422.44" stroke="#0c5e0c" stroke-width="0.8"/><line x1="326.18" y1="435.10" x2="326.18" y2="425.46" stroke="#0c5e0c" stroke-width="0.8"/><line x1="330.81" y1="435.10" x2="330.81" y2="421.80" stroke="#0c5e0c" stroke-width="0.8"/><line x1="335.44" y1="435.10" x2="335.44" y2="423.21" stroke="#0c5e0c" stroke-width="0.8"/><line x1="340.07" y1="435.10" x2="340.07" y2="424.62" stroke="#0c5e0c" stroke-width="0.8"/><line x1="344.70" y1="435.10" x2="344.70" y2="426.27" stroke="#0c5e0c" stroke-width="0.8"/><line x1="349.33" y1="435.10" x2="349.33" y2="424.24" stroke="#0c5e0c" stroke-width="0.8"/><line x1="353.96" y1="435.10" x2="353.96" y2="424.20" stroke="#0c5e0c" stroke-width="0.8"/><line x1="358.59" y1="435.10" x2="358.59" y2="426.98" stroke="#0c5e0c" stroke-width="0.8"/><line x1="363.22" y1="435.10" x2="363.22" y2="423.18" stroke="#0c5e0c" stroke-width="0.8"/><line x1="367.85" y1="435.10" x2="367.85" y2="424.07" stroke="#0c5e0c" stroke-width="0.8"/><line x1="372.48" y1="435.10" x2="372.48" y2="424.40" stroke="#0c5e0c" stroke-width="0.8"/><line x1="377.11" y1="435.10" x2="377.11" y2="425.51" stroke="#0c5e0c" stroke-width="0.8"/><line x1="381.74" y1="435.10" x2="381.74" y2="425.12" stroke="#0c5e0c" stroke-width="0.8"/><line x1="386.37" y1="435.10" x2="386.37" y2="426.80" stroke="#0c5e0c" stroke-width="0.8"/><line x1="391.00" y1="435.10" x2="391.00" y2="423.32" stroke="#0c5e0c" stroke-width="0.8"/><line x1="395.63" y1="435.10" x2="395.63" y2="423.41" stroke="#0c5e0c" stroke-width="0.8"/><line x1="400.26" y1="435.10" x2="400.26" y2="423.32" stroke="#0c5e0c" stroke-width="0.8"/><line x1="404.89" y1="435.10" x2="404.89" y2="427.00" stroke="#0c5e0c" stroke-width="0.8"/><line x1="409.52" y1="435.10" x2="409.52" y2="427.12" stroke="#0c5e0c" stroke-width="0.8"/><line x1="414.15" y1="435.10" x2="414.15" y2="424.98" stroke="#0c5e0c" stroke-width="0.8"/><line x1="418.78" y1="435.10" x2="418.78" y2="423.90" stroke="#0c5e0c" stroke-width="0.8"/><line x1="423.41" y1="435.10" x2="423.41" y2="424.84" stroke="#0c5e0c" stroke-width="0.8"/><line x1="428.04" y1="435.10" x2="428.04" y2="427.68" stroke="#0c5e0c" stroke-width="0.8"/><line x1="432.67" y1="435.10" x2="432.67" y2="423.55" stroke="#0c5e0c" stroke-width="0.8"/><line x1="437.30" y1="435.10" x2="437.30" y2="415.60" stroke="#0c5e0c" stroke-width="0.8"/><line x1="441.93" y1="435.10" x2="441.93" y2="417.23" stroke="#0c5e0c" stroke-width="0.8"/><line x1="446.56" y1="435.10" x2="446.56" y2="419.03" stroke="#0c5e0c" stroke-width="0.8"/><line x1="451.19" y1="435.10" x2="451.19" y2="415.37" stroke="#0c5e0c" stroke-width="0.8"/><line x1="455.82" y1="435.10" x2="455.82" y2="418.10" stroke="#0c5e0c" stroke-width="0.8"/><line x1="460.45" y1="435.10" x2="460.45" y2="415.30" stroke="#0c5e0c" stroke-width="0.8"/><line x1="465.08" y1="435.10" x2="465.08" y2="414.27" stroke="#0c5e0c" stroke-width="0.8"/><line x1="469.71" y1="435.10" x2="469.71" y2="417.72" stroke="#0c5e0c" stroke-width="0.8"/><line x1="474.34" y1="435.10" x2="474.34" y2="417.69" stroke="#0c5e0c" stroke-width="0.8"/><line x1="478.97" y1="435.10" x2="478.97" y2="414.42" stroke="#0c5e0c" stroke-width="0.8"/><line x1="483.60" y1="435.10" x2="483.60" y2="415.75" stroke="#0c5e0c" stroke-width="0.8"/><line x1="488.23" y1="435.10" x2="488.23" y2="419.08" stroke="#0c5e0c" stroke-width="0.8"/><line x1="492.86" y1="435.10" x2="492.86" y2="405.10" stroke="#0c5e0c" stroke-width="0.8"/><line x1="497.49" y1="435.10" x2="497.49" y2="419.19" stroke="#0c5e0c" stroke-width="0.8"/><line x1="502.12" y1="435.10" x2="502.12" y2="414.67" stroke="#0c5e0c" stroke-width="0.8"/><line x1="506.75" y1="435.10" x2="506.75" y2="415.26" stroke="#0c5e0c" stroke-width="0.8"/><line x1="511.38" y1="435.10" x2="511.38" y2="419.22" stroke="#0c5e0c" stroke-width="0.8"/><line x1="516.01" y1="435.10" x2="516.01" y2="423.10" stroke="#0c5e0c" stroke-width="0.8"/><line x1="520.64" y1="435.10" x2="520.64" y2="414.22" stroke="#0c5e0c" stroke-width="0.8"/><line x1="525.27" y1="435.10" x2="525.27" y2="416.16" stroke="#0c5e0c" stroke-width="0.8"/><line x1="529.90" y1="435.10" x2="529.90" y2="418.00" stroke="#0c5e0c" stroke-width="0.8"/><line x1="534.53" y1="435.10" x2="534.53" y2="416.81" stroke="#0c5e0c" stroke-width="0.8"/><line x1="539.16" y1="435.10" x2="539.16" y2="419.31" stroke="#0c5e0c" stroke-width="0.8"/><line x1="543.79" y1="435.10" x2="543.79" y2="420.01" stroke="#0c5e0c" stroke-width="0.8"/><line x1="548.42" y1="435.10" x2="548.42" y2="414.27" stroke="#0c5e0c" stroke-width="0.8"/><line x1="553.05" y1="435.10" x2="553.05" y2="416.20" stroke="#0c5e0c" stroke-width="0.8"/><line x1="557.68" y1="435.10" x2="557.68" y2="416.94" stroke="#0c5e0c" stroke-width="0.8"/><line x1="562.31" y1="435.10" x2="562.31" y2="414.50" stroke="#0c5e0c" stroke-width="0.8"/><line x1="566.94" y1="435.10" x2="566.94" y2="417.50" stroke="#0c5e0c" stroke-width="0.8"/><line x1="571.57" y1="435.10" x2="571.57" y2="414.87" stroke="#0c5e0c" stroke-width="0.8"/><line x1="576.20" y1="435.10" x2="576.20" y2="415.14" stroke="#0c5e0c" stroke-width="0.8"/><line x1="580.83" y1="435.10" x2="580.83" y2="418.83" stroke="#0c5e0c" stroke-width="0.8"/><line x1="122.46" y1="101.10" x2="122.46" y2="105.70" stroke="#0f8c0f" stroke-width="0.9"/><rect x="121.06" y="104.10" width="2.8" height="1.60" fill="#000" stroke="#0f8c0f" stroke-width="0.8"/><line x1="127.09" y1="98.10" x2="127.09" y2="104.80" stroke="#0f8c0f" stroke-width="0.9"/><rect x="125.69" y="98.10" width="2.8" height="6.70" fill="#000" stroke="#0f8c0f" stroke-width="0.8"/><line x1="131.72" y1="93.60" x2="131.72" y2="98.90" stroke="#0f8c0f" stroke-width="0.9"/><rect x="130.32" y="94.10" width="2.8" height="4.80" fill="#000" stroke="#0f8c0f" stroke-width="0.8"/><line x1="136.35" y1="94.90" x2="136.35" y2="97.30" stroke="#0f8c0f" stroke-width="0.9"/><rect x="134.95" y="94.90" width="2.8" height="2.40" fill="#8e8e8e" stroke="#0f8c0f" stroke-width="0.8"/><line x1="140.98" y1="94.10" x2="140.98" y2="100.90" stroke="#0f8c0f" stroke-width="0.9"/><rect x="139.58" y="96.80" width="2.8" height="4.10" fill="#8e8e8e" stroke="#0f8c0f" stroke-width="0.8"/><line x1="145.61" y1="102.50" x2="145.61" y2="105.10" stroke="#0f8c0f" stroke-width="0.9"/><rect x="144.21" y="102.50" width="2.8" height="1.60" fill="#8e8e8e" stroke="#0f8c0f" stroke-width="0.8"/><line x1="150.24" y1="101.10" x2="150.24" y2="104.80" stroke="#0f8c0f" stroke-width="0.9"/><rect x="148.84" y="101.10" width="2.8" height="3.70" fill="#8e8e8e" stroke="#0f8c0f" stroke-width="0.8"/><line x1="154.87" y1="98.40" x2="154.87" y2="105.70" stroke="#0f8c0f" stroke-width="0.9"/><rect x="153.47" y="102.50" width="2.8" height="1.10" fill="#8e8e8e" stroke="#0f8c0f" stroke-width="0.8"/><line x1="159.50" y1="103.60" x2="159.50" y2="104.60" stroke="#0f8c0f" stroke-width="0.9"/><rect x="158.10" y="103.60" width="2.8" height="1.00" fill="#8e8e8e" stroke="#0f8c0f" stroke-width="0.8"/><line x1="164.13" y1="104.10" x2="164.13" y2="110.10" stroke="#0f8c0f" stroke-width="0.9"/><rect x="162.73" y="104.10" width="2.8" height="6.00" fill="#8e8e8e" stroke="#0f8c0f" stroke-width="0.8"/><line x1="168.76" y1="106.80" x2="168.76" y2="112.40" stroke="#0f8c0f" stroke-width="0.9"/><rect x="167.36" y="106.80" width="2.8" height="3.30" fill="#000" stroke="#0f8c0f" stroke-width="0.8"/><line x1="173.39" y1="104.10" x2="173.39" y2="107.60" stroke="#0f8c0f" stroke-width="0.9"/><rect x="171.99" y="104.10" width="2.8" height="3.50" fill="#000" stroke="#0f8c0f" stroke-width="0.8"/><line x1="178.02" y1="104.70" x2="178.02" y2="105.50" stroke="#0f8c0f" stroke-width="0.9"/><rect x="176.62" y="104.70" width="2.8" height="1.00" fill="#000" stroke="#0f8c0f" stroke-width="0.8"/><line x1="182.65" y1="104.10" x2="182.65" y2="106.10" stroke="#0f8c0f" stroke-width="0.9"/><rect x="181.25" y="104.10" width="2.8" height="2.00" fill="#8e8e8e" stroke="#0f8c0f" stroke-width="0.8"/><line x1="187.28" y1="105.10" x2="187.28" y2="110.10" stroke="#0f8c0f" stroke-width="0.9"/><rect x="185.88" y="105.10" width="2.8" height="5.00" fill="#8e8e8e" stroke="#0f8c0f" stroke-width="0.8"/><line x1="191.91" y1="106.10" x2="191.91" y2="110.00" stroke="#0f8c0f" stroke-width="0.9"/><rect x="190.51" y="109.10" width="2.8" height="1.00" fill="#000" stroke="#0f8c0f" stroke-width="0.8"/><line x1="196.54" y1="103.60" x2="196.54" y2="110.10" stroke="#0f8c0f" stroke-width="0.9"/><rect x="195.14" y="103.60" width="2.8" height="6.50" fill="#000" stroke="#0f8c0f" stroke-width="0.8"/><line x1="201.17" y1="103.60" x2="201.17" y2="120.60" stroke="#0f8c0f" stroke-width="0.9"/><rect x="199.77" y="103.60" width="2.8" height="15.10" fill="#8e8e8e" stroke="#0f8c0f" stroke-width="0.8"/><line x1="205.80" y1="100.00" x2="205.80" y2="118.40" stroke="#0f8c0f" stroke-width="0.9"/><rect x="204.40" y="102.10" width="2.8" height="16.30" fill="#000" stroke="#0f8c0f" stroke-width="0.8"/><line x1="210.43" y1="101.10" x2="210.43" y2="108.40" stroke="#0f8c0f" stroke-width="0.9"/><rect x="209.03" y="101.10" width="2.8" height="7.30" fill="#8e8e8e" stroke="#0f8c0f" stroke-width="0.8"/><line x1="215.06" y1="100.10" x2="215.06" y2="107.10" stroke="#0f8c0f" stroke-width="0.9"/><rect x="213.66" y="105.10" width="2.8" height="2.00" fill="#000" stroke="#0f8c0f" stroke-width="0.8"/><line x1="219.69" y1="105.10" x2="219.69" y2="110.80" stroke="#0f8c0f" stroke-width="0.9"/><rect x="218.29" y="105.10" width="2.8" height="5.70" fill="#8e8e8e" stroke="#0f8c0f" stroke-width="0.8"/><line x1="224.32" y1="110.80" x2="224.32" y2="115.10" stroke="#0f8c0f" stroke-width="0.9"/><rect x="222.92" y="110.80" width="2.8" height="4.30" fill="#8e8e8e" stroke="#0f8c0f" stroke-width="0.8"/><line x1="228.95" y1="97.10" x2="228.95" y2="121.10" stroke="#0f8c0f" stroke-width="0.9"/><rect x="227.55" y="102.80" width="2.8" height="12.80" fill="#000" stroke="#0f8c0f" stroke-width="0.8"/><line x1="233.58" y1="85.10" x2="233.58" y2="102.80" stroke="#0f8c0f" stroke-width="0.9"/><rect x="232.18" y="88.10" width="2.8" height="14.70" fill="#000" stroke="#0f8c0f" stroke-width="0.8"/><line x1="238.21" y1="87.10" x2="238.21" y2="94.10" stroke="#0f8c0f" stroke-width="0.9"/><rect x="236.81" y="88.70" width="2.8" height="2.00" fill="#8e8e8e" stroke="#0f8c0f" stroke-width="0.8"/><line x1="242.84" y1="78.10" x2="242.84" y2="92.10" stroke="#0f8c0f" stroke-width="0.9"/><rect x="241.44" y="84.30" width="2.8" height="6.80" fill="#000" stroke="#0f8c0f" stroke-width="0.8"/><line x1="247.47" y1="67.30" x2="247.47" y2="84.30" stroke="#0f8c0f" stroke-width="0.9"/><rect x="246.07" y="69.30" width="2.8" height="15.00" fill="#000" stroke="#0f8c0f" stroke-width="0.8"/><line x1="252.10" y1="69.30" x2="252.10" y2="80.80" stroke="#0f8c0f" stroke-width="0.9"/><rect x="250.70" y="69.30" width="2.8" height="9.10" fill="#8e8e8e" stroke="#0f8c0f" stroke-width="0.8"/><line x1="256.73" y1="68.10" x2="256.73" y2="102.70" stroke="#0f8c0f" stroke-width="0.9"/><rect x="255.33" y="78.40" width="2.8" height="24.30" fill="#8e8e8e" stroke="#0f8c0f" stroke-width="0.8"/><line x1="261.36" y1="89.60" x2="261.36" y2="102.70" stroke="#0f8c0f" stroke-width="0.9"/><rect x="259.96" y="91.60" width="2.8" height="11.10" fill="#000" stroke="#0f8c0f" stroke-width="0.8"/><line x1="265.99" y1="80.80" x2="265.99" y2="105.40" stroke="#0f8c0f" stroke-width="0.9"/><rect x="264.59" y="91.10" width="2.8" height="14.30" fill="#8e8e8e" stroke="#0f8c0f" stroke-width="0.8"/><line x1="270.62" y1="79.10" x2="270.62" y2="108.60" stroke="#0f8c0f" stroke-width="0.9"/><rect x="269.22" y="79.10" width="2.8" height="25.50" fill="#000" stroke="#0f8c0f" stroke-width="0.8"/><line x1="275.25" y1="76.10" x2="275.25" y2="86.10" stroke="#0f8c0f" stroke-width="0.9"/><rect x="273.85" y="79.70" width="2.8" height="1.90" fill="#8e8e8e" stroke="#0f8c0f" stroke-width="0.8"/><line x1="279.88" y1="72.10" x2="279.88" y2="88.10" stroke="#0f8c0f" stroke-width="0.9"/><rect x="278.48" y="80.10" width="2.8" height="2.60" fill="#000" stroke="#0f8c0f" stroke-width="0.8"/><line x1="284.51" y1="79.10" x2="284.51" y2="95.10" stroke="#0f8c0f" stroke-width="0.9"/><rect x="283.11" y="79.10" width="2.8" height="9.60" fill="#8e8e8e" stroke="#0f8c0f" stroke-width="0.8"/><line x1="289.14" y1="78.10" x2="289.14" y2="92.10" stroke="#0f8c0f" stroke-width="0.9"/><rect x="287.74" y="86.40" width="2.8" height="2.30" fill="#000" stroke="#0f8c0f" stroke-width="0.8"/><line x1="293.77" y1="80.10" x2="293.77" y2="95.10" stroke="#0f8c0f" stroke-width="0.9"/><rect x="292.37" y="86.80" width="2.8" height="8.30" fill="#8e8e8e" stroke="#0f8c0f" stroke-width="0.8"/><line x1="298.40" y1="79.10" x2="298.40" y2="97.50" stroke="#0f8c0f" stroke-width="0.9"/><rect x="297.00" y="79.10" width="2.8" height="16.00" fill="#000" stroke="#0f8c0f" stroke-width="0.8"/><line x1="303.03" y1="53.10" x2="303.03" y2="81.60" stroke="#0f8c0f" stroke-width="0.9"/><rect x="301.63" y="55.40" width="2.8" height="25.10" fill="#000" stroke="#0f8c0f" stroke-width="0.8"/><line x1="307.66" y1="43.90" x2="307.66" y2="60.90" stroke="#0f8c0f" stroke-width="0.9"/><rect x="306.26" y="52.50" width="2.8" height="3.60" fill="#000" stroke="#0f8c0f" stroke-width="0.8"/><line x1="312.29" y1="46.10" x2="312.29" y2="65.70" stroke="#0f8c0f" stroke-width="0.9"/><rect x="310.89" y="52.10" width="2.8" height="12.00" fill="#8e8e8e" stroke="#0f8c0f" stroke-width="0.8"/><line x1="316.92" y1="58.50" x2="316.92" y2="71.10" stroke="#0f8c0f" stroke-width="0.9"/><rect x="315.52" y="64.10" width="2.8" height="4.30" fill="#8e8e8e" stroke="#0f8c0f" stroke-width="0.8"/><line x1="321.55" y1="64.90" x2="321.55" y2="77.60" stroke="#0f8c0f" stroke-width="0.9"/><rect x="320.15" y="68.40" width="2.8" height="1.70" fill="#8e8e8e" stroke="#0f8c0f" stroke-width="0.8"/><line x1="326.18" y1="53.80" x2="326.18" y2="70.90" stroke="#0f8c0f" stroke-width="0.9"/><rect x="324.78" y="66.80" width="2.8" height="4.10" fill="#000" stroke="#0f8c0f" stroke-width="0.8"/><line x1="330.81" y1="57.70" x2="330.81" y2="71.10" stroke="#0f8c0f" stroke-width="0.9"/><rect x="329.41" y="60.10" width="2.8" height="6.70" fill="#000" stroke="#0f8c0f" stroke-width="0.8"/><line x1="335.44" y1="48.10" x2="335.44" y2="64.90" stroke="#0f8c0f" stroke-width="0.9"/><rect x="334.04" y="57.30" width="2.8" height="3.10" fill="#000" stroke="#0f8c0f" stroke-width="0.8"/><line x1="340.07" y1="43.40" x2="340.07" y2="57.70" stroke="#0f8c0f" stroke-width="0.9"/><rect x="338.67" y="43.40" width="2.8" height="14.30" fill="#000" stroke="#0f8c0f" stroke-width="0.8"/><line x1="344.70" y1="35.50" x2="344.70" y2="45.10" stroke="#0f8c0f" stroke-width="0.9"/><rect x="343.30" y="39.40" width="2.8" height="5.70" fill="#000" stroke="#0f8c0f" stroke-width="0.8"/><line x1="349.33" y1="35.80" x2="349.33" y2="53.60" stroke="#0f8c0f" stroke-width="0.9"/><rect x="347.93" y="39.30" width="2.8" height="10.30" fill="#8e8e8e" stroke="#0f8c0f" stroke-width="0.8"/><line x1="353.96" y1="33.70" x2="353.96" y2="51.10" stroke="#0f8c0f" stroke-width="0.9"/><rect x="352.56" y="48.10" width="2.8" height="2.30" fill="#000" stroke="#0f8c0f" stroke-width="0.8"/><line x1="358.59" y1="24.90" x2="358.59" y2="48.80" stroke="#0f8c0f" stroke-width="0.9"/><rect x="357.19" y="29.70" width="2.8" height="18.30" fill="#000" stroke="#0f8c0f" stroke-width="0.8"/><line x1="363.22" y1="28.10" x2="363.22" y2="42.40" stroke="#0f8c0f" stroke-width="0.9"/><rect x="361.82" y="30.10" width="2.8" height="5.60" fill="#8e8e8e" stroke="#0f8c0f" stroke-width="0.8"/><line x1="367.85" y1="24.60" x2="367.85" y2="40.10" stroke="#0f8c0f" stroke-width="0.9"/><rect x="366.45" y="32.60" width="2.8" height="1.90" fill="#000" stroke="#0f8c0f" stroke-width="0.8"/><line x1="372.48" y1="24.60" x2="372.48" y2="36.90" stroke="#0f8c0f" stroke-width="0.9"/><rect x="371.08" y="24.60" width="2.8" height="8.30" fill="#000" stroke="#0f8c0f" stroke-width="0.8"/><line x1="377.11" y1="19.40" x2="377.11" y2="52.80" stroke="#0f8c0f" stroke-width="0.9"/><rect x="375.71" y="24.60" width="2.8" height="24.20" fill="#8e8e8e" stroke="#0f8c0f" stroke-width="0.8"/><line x1="381.74" y1="45.60" x2="381.74" y2="61.50" stroke="#0f8c0f" stroke-width="0.9"/><rect x="380.34" y="49.60" width="2.8" height="7.10" fill="#8e8e8e" stroke="#0f8c0f" stroke-width="0.8"/><line x1="386.37" y1="55.10" x2="386.37" y2="67.90" stroke="#0f8c0f" stroke-width="0.9"/><rect x="384.97" y="56.40" width="2.8" height="3.80" fill="#8e8e8e" stroke="#0f8c0f" stroke-width="0.8"/><line x1="391.00" y1="47.10" x2="391.00" y2="63.90" stroke="#0f8c0f" stroke-width="0.9"/><rect x="389.60" y="57.50" width="2.8" height="3.20" fill="#000" stroke="#0f8c0f" stroke-width="0.8"/><line x1="395.63" y1="57.10" x2="395.63" y2="69.80" stroke="#0f8c0f" stroke-width="0.9"/><rect x="394.23" y="57.10" width="2.8" height="12.70" fill="#8e8e8e" stroke="#0f8c0f" stroke-width="0.8"/><line x1="400.26" y1="69.50" x2="400.26" y2="91.70" stroke="#0f8c0f" stroke-width="0.9"/><rect x="398.86" y="69.50" width="2.8" height="12.60" fill="#8e8e8e" stroke="#0f8c0f" stroke-width="0.8"/><line x1="404.89" y1="82.50" x2="404.89" y2="110.80" stroke="#0f8c0f" stroke-width="0.9"/><rect x="403.49" y="82.50" width="2.8" height="28.30" fill="#8e8e8e" stroke="#0f8c0f" stroke-width="0.8"/><line x1="409.52" y1="105.10" x2="409.52" y2="136.10" stroke="#0f8c0f" stroke-width="0.9"/><rect x="408.12" y="109.10" width="2.8" height="22.70" fill="#8e8e8e" stroke="#0f8c0f" stroke-width="0.8"/><line x1="414.15" y1="112.40" x2="414.15" y2="132.70" stroke="#0f8c0f" stroke-width="0.9"/><rect x="412.75" y="120.10" width="2.8" height="12.60" fill="#000" stroke="#0f8c0f" stroke-width="0.8"/><line x1="418.78" y1="103.60" x2="418.78" y2="126.70" stroke="#0f8c0f" stroke-width="0.9"/><rect x="417.38" y="116.40" width="2.8" height="3.90" fill="#000" stroke="#0f8c0f" stroke-width="0.8"/><line x1="423.41" y1="110.10" x2="423.41" y2="134.60" stroke="#0f8c0f" stroke-width="0.9"/><rect x="422.01" y="116.40" width="2.8" height="18.20" fill="#8e8e8e" stroke="#0f8c0f" stroke-width="0.8"/><line x1="428.04" y1="111.60" x2="428.04" y2="145.10" stroke="#0f8c0f" stroke-width="0.9"/><rect x="426.64" y="114.00" width="2.8" height="19.80" fill="#000" stroke="#0f8c0f" stroke-width="0.8"/><line x1="432.67" y1="114.00" x2="432.67" y2="128.10" stroke="#0f8c0f" stroke-width="0.9"/><rect x="431.27" y="114.00" width="2.8" height="4.70" fill="#8e8e8e" stroke="#0f8c0f" stroke-width="0.8"/><line x1="437.30" y1="110.10" x2="437.30" y2="133.10" stroke="#0f8c0f" stroke-width="0.9"/><rect x="435.90" y="119.10" width="2.8" height="2.50" fill="#8e8e8e" stroke="#0f8c0f" stroke-width="0.8"/><line x1="441.93" y1="11.40" x2="441.93" y2="155.10" stroke="#0f8c0f" stroke-width="0.9"/><rect x="440.53" y="24.60" width="2.8" height="97.00" fill="#000" stroke="#0f8c0f" stroke-width="0.8"/><line x1="446.56" y1="24.60" x2="446.56" y2="137.80" stroke="#0f8c0f" stroke-width="0.9"/><rect x="445.16" y="24.60" width="2.8" height="113.20" fill="#8e8e8e" stroke="#0f8c0f" stroke-width="0.8"/><line x1="451.19" y1="99.10" x2="451.19" y2="178.10" stroke="#0f8c0f" stroke-width="0.9"/><rect x="449.79" y="110.80" width="2.8" height="26.20" fill="#000" stroke="#0f8c0f" stroke-width="0.8"/><line x1="455.82" y1="112.40" x2="455.82" y2="180.70" stroke="#0f8c0f" stroke-width="0.9"/><rect x="454.42" y="112.40" width="2.8" height="68.30" fill="#8e8e8e" stroke="#0f8c0f" stroke-width="0.8"/><line x1="460.45" y1="172.50" x2="460.45" y2="247.50" stroke="#0f8c0f" stroke-width="0.9"/><rect x="459.05" y="180.40" width="2.8" height="35.90" fill="#8e8e8e" stroke="#0f8c0f" stroke-width="0.8"/><line x1="465.08" y1="192.60" x2="465.08" y2="226.10" stroke="#0f8c0f" stroke-width="0.9"/><rect x="463.68" y="213.10" width="2.8" height="2.60" fill="#000" stroke="#0f8c0f" stroke-width="0.8"/><line x1="469.71" y1="199.10" x2="469.71" y2="234.10" stroke="#0f8c0f" stroke-width="0.9"/><rect x="468.31" y="213.10" width="2.8" height="15.30" fill="#8e8e8e" stroke="#0f8c0f" stroke-width="0.8"/><line x1="474.34" y1="210.90" x2="474.34" y2="241.50" stroke="#0f8c0f" stroke-width="0.9"/><rect x="472.94" y="228.40" width="2.8" height="6.70" fill="#8e8e8e" stroke="#0f8c0f" stroke-width="0.8"/><line x1="478.97" y1="226.10" x2="478.97" y2="276.70" stroke="#0f8c0f" stroke-width="0.9"/><rect x="477.57" y="235.10" width="2.8" height="37.50" fill="#8e8e8e" stroke="#0f8c0f" stroke-width="0.8"/><line x1="483.60" y1="272.60" x2="483.60" y2="285.10" stroke="#0f8c0f" stroke-width="0.9"/><rect x="482.20" y="272.60" width="2.8" height="9.10" fill="#8e8e8e" stroke="#0f8c0f" stroke-width="0.8"/><line x1="488.23" y1="262.10" x2="488.23" y2="288.10" stroke="#0f8c0f" stroke-width="0.9"/><rect x="486.83" y="284.70" width="2.8" height="3.00" fill="#000" stroke="#0f8c0f" stroke-width="0.8"/><line x1="492.86" y1="283.10" x2="492.86" y2="338.50" stroke="#0f8c0f" stroke-width="0.9"/><rect x="491.46" y="283.10" width="2.8" height="40.00" fill="#8e8e8e" stroke="#0f8c0f" stroke-width="0.8"/><line x1="497.49" y1="316.10" x2="497.49" y2="339.50" stroke="#0f8c0f" stroke-width="0.9"/><rect x="496.09" y="322.40" width="2.8" height="17.10" fill="#8e8e8e" stroke="#0f8c0f" stroke-width="0.8"/><line x1="502.12" y1="311.10" x2="502.12" y2="347.50" stroke="#0f8c0f" stroke-width="0.9"/><rect x="500.72" y="319.40" width="2.8" height="20.10" fill="#000" stroke="#0f8c0f" stroke-width="0.8"/><line x1="506.75" y1="292.10" x2="506.75" y2="322.40" stroke="#0f8c0f" stroke-width="0.9"/><rect x="505.35" y="304.30" width="2.8" height="16.10" fill="#000" stroke="#0f8c0f" stroke-width="0.8"/><line x1="511.38" y1="302.30" x2="511.38" y2="320.40" stroke="#0f8c0f" stroke-width="0.9"/><rect x="509.98" y="304.30" width="2.8" height="9.00" fill="#8e8e8e" stroke="#0f8c0f" stroke-width="0.8"/><line x1="516.01" y1="278.10" x2="516.01" y2="313.30" stroke="#0f8c0f" stroke-width="0.9"/><rect x="514.61" y="287.10" width="2.8" height="26.20" fill="#000" stroke="#0f8c0f" stroke-width="0.8"/><line x1="520.64" y1="280.10" x2="520.64" y2="300.10" stroke="#0f8c0f" stroke-width="0.9"/><rect x="519.24" y="287.10" width="2.8" height="10.00" fill="#8e8e8e" stroke="#0f8c0f" stroke-width="0.8"/><line x1="525.27" y1="297.10" x2="525.27" y2="337.50" stroke="#0f8c0f" stroke-width="0.9"/><rect x="523.87" y="297.10" width="2.8" height="36.00" fill="#8e8e8e" stroke="#0f8c0f" stroke-width="0.8"/><line x1="529.90" y1="293.10" x2="529.90" y2="332.50" stroke="#0f8c0f" stroke-width="0.9"/><rect x="528.50" y="293.10" width="2.8" height="38.80" fill="#000" stroke="#0f8c0f" stroke-width="0.8"/><line x1="534.53" y1="284.10" x2="534.53" y2="310.30" stroke="#0f8c0f" stroke-width="0.9"/><rect x="533.13" y="293.10" width="2.8" height="17.20" fill="#8e8e8e" stroke="#0f8c0f" stroke-width="0.8"/><line x1="539.16" y1="305.10" x2="539.16" y2="325.40" stroke="#0f8c0f" stroke-width="0.9"/><rect x="537.76" y="310.30" width="2.8" height="12.10" fill="#8e8e8e" stroke="#0f8c0f" stroke-width="0.8"/><line x1="543.79" y1="305.10" x2="543.79" y2="321.80" stroke="#0f8c0f" stroke-width="0.9"/><rect x="542.39" y="314.90" width="2.8" height="6.90" fill="#000" stroke="#0f8c0f" stroke-width="0.8"/><line x1="548.42" y1="288.10" x2="548.42" y2="322.40" stroke="#0f8c0f" stroke-width="0.9"/><rect x="547.02" y="293.10" width="2.8" height="21.80" fill="#000" stroke="#0f8c0f" stroke-width="0.8"/><line x1="553.05" y1="284.10" x2="553.05" y2="307.10" stroke="#0f8c0f" stroke-width="0.9"/><rect x="551.65" y="287.10" width="2.8" height="6.00" fill="#000" stroke="#0f8c0f" stroke-width="0.8"/><line x1="557.68" y1="265.60" x2="557.68" y2="293.10" stroke="#0f8c0f" stroke-width="0.9"/><rect x="556.28" y="265.60" width="2.8" height="22.10" fill="#000" stroke="#0f8c0f" stroke-width="0.8"/><line x1="562.31" y1="255.50" x2="562.31" y2="278.70" stroke="#0f8c0f" stroke-width="0.9"/><rect x="560.91" y="261.60" width="2.8" height="5.00" fill="#000" stroke="#0f8c0f" stroke-width="0.8"/><line x1="566.94" y1="237.10" x2="566.94" y2="265.60" stroke="#0f8c0f" stroke-width="0.9"/><rect x="565.54" y="242.50" width="2.8" height="19.10" fill="#000" stroke="#0f8c0f" stroke-width="0.8"/><line x1="571.57" y1="241.50" x2="571.57" y2="253.50" stroke="#0f8c0f" stroke-width="0.9"/><rect x="570.17" y="241.50" width="2.8" height="8.00" fill="#8e8e8e" stroke="#0f8c0f" stroke-width="0.8"/><line x1="576.20" y1="237.50" x2="576.20" y2="254.50" stroke="#0f8c0f" stroke-width="0.9"/><rect x="574.80" y="246.10" width="2.8" height="3.40" fill="#000" stroke="#0f8c0f" stroke-width="0.8"/><line x1="580.83" y1="239.10" x2="580.83" y2="248.10" stroke="#0f8c0f" stroke-width="0.9"/><rect x="579.43" y="243.10" width="2.8" height="2.50" fill="#8e8e8e" stroke="#0f8c0f" stroke-width="0.8"/><g transform="translate(4.80,5.70)"><rect x="0" y="0" width="4.2" height="6.3" fill="#8a5a3a"/><rect x="4.4" y="0" width="4.2" height="6.3" fill="#2f5a86"/><path d="M0 2.1H8.6M0 4.2H8.6" stroke="#d0c8c0" stroke-width="0.7"/></g><g transform="translate(17.00,5.70)"><rect x="0" y="1" width="4" height="5.3" fill="#8a5a3a"/><rect x="4.6" y="0.6" width="4" height="5.7" fill="#2f5a86"/><path d="M1.5 0.8H7" stroke="#d0d0d0" stroke-width="0.8"/></g><text x="28.80" y="11.10" font-size="6.4" fill="#b0b0b0" font-family="Liberation Sans" textLength="103" lengthAdjust="spacingAndGlyphs">USDJPY, M5:  US Dollar vs Japanese Yen</text></svg>
<div class="r" style="left:7.5px;top:85px;width:153.5px;height:433px;background:#fff;"></div>
<div class="r" style="left:7.5px;top:86.5px;width:153.5px;height:9.5px;background:linear-gradient(#c4d6ea,#a9c2de);"></div>
<div class="t " style="left:9.4px;top:89.32px;font-size:6.5px;color:#1a1a1a;"><i class="j">気</i><i class="j">配</i><i class="j">値</i><i class="j">表</i><i class="j">示</i>: 11:49:57</div>
<div class="r" style="left:7.5px;top:96px;width:153.5px;height:14.7px;background:#fff;"></div>
<div class="t " style="left:11.9px;top:100.66px;font-size:6.6px;color:#333;"><i class="j">銘</i><i class="j">柄</i></div>
<div class="t " style="left:86.3px;top:100.66px;font-size:6.6px;color:#333;"><i class="j">売</i><i class="j">気</i><i class="j">配</i>(...</div>
<div class="t " style="left:122.7px;top:100.66px;font-size:6.6px;color:#333;"><i class="j">買</i><i class="j">気</i><i class="j">配</i>(...</div>
<div class="r" style="left:80.4px;top:97px;width:0.8px;height:13.5px;background:#e2e2e2;"></div>
<div class="r" style="left:117.6px;top:97px;width:0.8px;height:13.5px;background:#e2e2e2;"></div>
<div class="r" style="left:154.3px;top:97px;width:0.8px;height:13.5px;background:#e2e2e2;"></div>
<div class="r" style="left:7.5px;top:111.0px;width:146.8px;height:11.57px;background:#0a78d4;"></div>
<div class="r" style="left:80.4px;top:111.0px;width:0.8px;height:11.57px;background:#2a6aae;"></div>
<div class="r" style="left:117.6px;top:111.0px;width:0.8px;height:11.57px;background:#2a6aae;"></div>
<svg class="r" style="left:11.8px;top:114.78px" width="4.5" height="4.5" viewBox="0 0 4.5 4.5"><path d="M0.5 0.5L3.8 3.8M3.9 1.4V3.9H1.4" fill="none" stroke="#e85050" stroke-width="0.8"/></svg>
<div class="t" style="left:20.7px;top:112.83px;font-size:8.0px;color:#fff;transform:scaleX(0.74);transform-origin:0 0;-webkit-text-stroke:0.2px #fff">USDJPY</div>
<div class="t" style="right:639px;text-align:right;top:112.53px;font-size:8.0px;color:#fff;transform:scaleX(0.76);transform-origin:100% 0;-webkit-text-stroke:0.15px #fff">155.541</div>
<div class="t" style="right:602.2px;text-align:right;top:112.53px;font-size:8.0px;color:#fff;transform:scaleX(0.76);transform-origin:100% 0;-webkit-text-stroke:0.15px #fff">155.56</div>
<div class="r" style="left:7.5px;top:122.57px;width:146.8px;height:11.57px;background:#e8e8e8;"></div>
<div class="r" style="left:80.4px;top:122.57px;width:0.8px;height:11.57px;background:#d9d9d9;"></div>
<div class="r" style="left:117.6px;top:122.57px;width:0.8px;height:11.57px;background:#d9d9d9;"></div>
<div class="r" style="left:7.5px;top:133.64px;width:146.8px;height:0.5px;background:#dcdcdc;"></div>
<svg class="r" style="left:11.8px;top:126.35px" width="4.5" height="4.5" viewBox="0 0 4.5 4.5"><path d="M0.5 0.5L3.8 3.8M3.9 1.4V3.9H1.4" fill="none" stroke="#e85050" stroke-width="0.8"/></svg>
<div class="t" style="left:20.7px;top:124.40px;font-size:8.0px;color:#2a2a2a;transform:scaleX(0.74);transform-origin:0 0;-webkit-text-stroke:0.2px #2a2a2a">CHFSGD</div>
<div class="t" style="right:639px;text-align:right;top:124.10px;font-size:8.0px;color:#f03232;transform:scaleX(0.76);transform-origin:100% 0;-webkit-text-stroke:0.15px #f03232">1.48803</div>
<div class="t" style="right:602.2px;text-align:right;top:124.10px;font-size:8.0px;color:#f03232;transform:scaleX(0.76);transform-origin:100% 0;-webkit-text-stroke:0.15px #f03232">1.4911</div>
<div class="r" style="left:7.5px;top:134.14px;width:146.8px;height:11.57px;background:#fff;"></div>
<div class="r" style="left:80.4px;top:134.14px;width:0.8px;height:11.57px;background:#d9d9d9;"></div>
<div class="r" style="left:117.6px;top:134.14px;width:0.8px;height:11.57px;background:#d9d9d9;"></div>
<div class="r" style="left:7.5px;top:145.21px;width:146.8px;height:0.5px;background:#dcdcdc;"></div>
<div class="r" style="left:13.4px;top:139.42px;width:1px;height:1px;background:#888;"></div>
<div class="t" style="left:20.7px;top:135.97px;font-size:8.0px;color:#2a2a2a;transform:scaleX(0.74);transform-origin:0 0;-webkit-text-stroke:0.2px #2a2a2a">EURDKK</div>
<div class="t" style="right:639px;text-align:right;top:135.67px;font-size:8.0px;color:#3434ee;transform:scaleX(0.76);transform-origin:100% 0;-webkit-text-stroke:0.15px #3434ee">7.45873</div>
<div class="t" style="right:602.2px;text-align:right;top:135.67px;font-size:8.0px;color:#3434ee;transform:scaleX(0.76);transform-origin:100% 0;-webkit-text-stroke:0.15px #3434ee">7.4633</div>
<div class="r" style="left:7.5px;top:145.71px;width:146.8px;height:11.57px;background:#e8e8e8;"></div>
<div class="r" style="left:80.4px;top:145.71px;width:0.8px;height:11.57px;background:#d9d9d9;"></div>
<div class="r" style="left:117.6px;top:145.71px;width:0.8px;height:11.57px;background:#d9d9d9;"></div>
<div class="r" style="left:7.5px;top:156.78px;width:146.8px;height:0.5px;background:#dcdcdc;"></div>
<svg class="r" style="left:11.8px;top:149.19px" width="4.5" height="4.5" viewBox="0 0 4.5 4.5"><path d="M0.5 3.9L3.8 0.6M1.4 0.5H3.9V3" fill="none" stroke="#30a850" stroke-width="0.8"/></svg>
<div class="t" style="left:20.7px;top:147.54px;font-size:8.0px;color:#2a2a2a;transform:scaleX(0.74);transform-origin:0 0;-webkit-text-stroke:0.2px #2a2a2a">EURHKD</div>
<div class="t" style="right:639px;text-align:right;top:147.24px;font-size:8.0px;color:#3434ee;transform:scaleX(0.76);transform-origin:100% 0;-webkit-text-stroke:0.15px #3434ee">8.16781</div>
<div class="t" style="right:602.2px;text-align:right;top:147.24px;font-size:8.0px;color:#3434ee;transform:scaleX(0.76);transform-origin:100% 0;-webkit-text-stroke:0.15px #3434ee">8.1743</div>
<div class="r" style="left:7.5px;top:157.28px;width:146.8px;height:11.57px;background:#fff;"></div>
<div class="r" style="left:80.4px;top:157.28px;width:0.8px;height:11.57px;background:#d9d9d9;"></div>
<div class="r" style="left:117.6px;top:157.28px;width:0.8px;height:11.57px;background:#d9d9d9;"></div>
<div class="r" style="left:7.5px;top:168.35px;width:146.8px;height:0.5px;background:#dcdcdc;"></div>
<svg class="r" style="left:11.8px;top:160.76px" width="4.5" height="4.5" viewBox="0 0 4.5 4.5"><path d="M0.5 3.9L3.8 0.6M1.4 0.5H3.9V3" fill="none" stroke="#30a850" stroke-width="0.8"/></svg>
<div class="t" style="left:20.7px;top:159.11px;font-size:8.0px;color:#2a2a2a;transform:scaleX(0.74);transform-origin:0 0;-webkit-text-stroke:0.2px #2a2a2a">EURHUF</div>
<div class="t" style="right:639px;text-align:right;top:158.81px;font-size:8.0px;color:#3434ee;transform:scaleX(0.76);transform-origin:100% 0;-webkit-text-stroke:0.15px #3434ee">409.010</div>
<div class="t" style="right:602.2px;text-align:right;top:158.81px;font-size:8.0px;color:#3434ee;transform:scaleX(0.76);transform-origin:100% 0;-webkit-text-stroke:0.15px #3434ee">409.50</div>
<div class="r" style="left:7.5px;top:168.85px;width:146.8px;height:11.57px;background:#e8e8e8;"></div>
<div class="r" style="left:80.4px;top:168.85px;width:0.8px;height:11.57px;background:#d9d9d9;"></div>
<div class="r" style="left:117.6px;top:168.85px;width:0.8px;height:11.57px;background:#d9d9d9;"></div>
<div class="r" style="left:7.5px;top:179.92px;width:146.8px;height:0.5px;background:#dcdcdc;"></div>
<svg class="r" style="left:11.8px;top:172.63px" width="4.5" height="4.5" viewBox="0 0 4.5 4.5"><path d="M0.5 0.5L3.8 3.8M3.9 1.4V3.9H1.4" fill="none" stroke="#e85050" stroke-width="0.8"/></svg>
<div class="t" style="left:20.7px;top:170.68px;font-size:8.0px;color:#2a2a2a;transform:scaleX(0.74);transform-origin:0 0;-webkit-text-stroke:0.2px #2a2a2a">EURNOK</div>
<div class="t" style="right:639px;text-align:right;top:170.38px;font-size:8.0px;color:#3434ee;transform:scaleX(0.76);transform-origin:100% 0;-webkit-text-stroke:0.15px #3434ee">11.75940</div>
<div class="t" style="right:602.2px;text-align:right;top:170.38px;font-size:8.0px;color:#f03232;transform:scaleX(0.76);transform-origin:100% 0;-webkit-text-stroke:0.15px #f03232">11.7735</div>
<div class="r" style="left:7.5px;top:180.42px;width:146.8px;height:11.57px;background:#fff;"></div>
<div class="r" style="left:80.4px;top:180.42px;width:0.8px;height:11.57px;background:#d9d9d9;"></div>
<div class="r" style="left:117.6px;top:180.42px;width:0.8px;height:11.57px;background:#d9d9d9;"></div>
<div class="r" style="left:7.5px;top:191.49px;width:146.8px;height:0.5px;background:#dcdcdc;"></div>
<svg class="r" style="left:11.8px;top:184.21px" width="4.5" height="4.5" viewBox="0 0 4.5 4.5"><path d="M0.5 0.5L3.8 3.8M3.9 1.4V3.9H1.4" fill="none" stroke="#e85050" stroke-width="0.8"/></svg>
<div class="t" style="left:20.7px;top:182.25px;font-size:8.0px;color:#2a2a2a;transform:scaleX(0.74);transform-origin:0 0;-webkit-text-stroke:0.2px #2a2a2a">EURPLN</div>
<div class="t" style="right:639px;text-align:right;top:181.95px;font-size:8.0px;color:#f03232;transform:scaleX(0.76);transform-origin:100% 0;-webkit-text-stroke:0.15px #f03232">4.20694</div>
<div class="t" style="right:602.2px;text-align:right;top:181.95px;font-size:8.0px;color:#f03232;transform:scaleX(0.76);transform-origin:100% 0;-webkit-text-stroke:0.15px #f03232">4.2143</div>
<div class="r" style="left:7.5px;top:191.99px;width:146.8px;height:11.57px;background:#e8e8e8;"></div>
<div class="r" style="left:80.4px;top:191.99px;width:0.8px;height:11.57px;background:#d9d9d9;"></div>
<div class="r" style="left:117.6px;top:191.99px;width:0.8px;height:11.57px;background:#d9d9d9;"></div>
<div class="r" style="left:7.5px;top:203.06px;width:146.8px;height:0.5px;background:#dcdcdc;"></div>
<svg class="r" style="left:11.8px;top:195.47px" width="4.5" height="4.5" viewBox="0 0 4.5 4.5"><path d="M0.5 3.9L3.8 0.6M1.4 0.5H3.9V3" fill="none" stroke="#30a850" stroke-width="0.8"/></svg>
<div class="t" style="left:20.7px;top:193.82px;font-size:8.0px;color:#2a2a2a;transform:scaleX(0.74);transform-origin:0 0;-webkit-text-stroke:0.2px #2a2a2a">EURSEK</div>
<div class="t" style="right:639px;text-align:right;top:193.52px;font-size:8.0px;color:#3434ee;transform:scaleX(0.76);transform-origin:100% 0;-webkit-text-stroke:0.15px #3434ee">11.45072</div>
<div class="t" style="right:602.2px;text-align:right;top:193.52px;font-size:8.0px;color:#3434ee;transform:scaleX(0.76);transform-origin:100% 0;-webkit-text-stroke:0.15px #3434ee">11.4614</div>
<div class="r" style="left:7.5px;top:203.56px;width:146.8px;height:11.57px;background:#fff;"></div>
<div class="r" style="left:80.4px;top:203.56px;width:0.8px;height:11.57px;background:#d9d9d9;"></div>
<div class="r" style="left:117.6px;top:203.56px;width:0.8px;height:11.57px;background:#d9d9d9;"></div>
<div class="r" style="left:7.5px;top:214.63px;width:146.8px;height:0.5px;background:#dcdcdc;"></div>
<svg class="r" style="left:11.8px;top:207.04px" width="4.5" height="4.5" viewBox="0 0 4.5 4.5"><path d="M0.5 3.9L3.8 0.6M1.4 0.5H3.9V3" fill="none" stroke="#30a850" stroke-width="0.8"/></svg>
<div class="t" style="left:20.7px;top:205.39px;font-size:8.0px;color:#2a2a2a;transform:scaleX(0.74);transform-origin:0 0;-webkit-text-stroke:0.2px #2a2a2a">EURSGD</div>
<div class="t" style="right:639px;text-align:right;top:205.09px;font-size:8.0px;color:#3434ee;transform:scaleX(0.76);transform-origin:100% 0;-webkit-text-stroke:0.15px #3434ee">1.41192</div>
<div class="t" style="right:602.2px;text-align:right;top:205.09px;font-size:8.0px;color:#3434ee;transform:scaleX(0.76);transform-origin:100% 0;-webkit-text-stroke:0.15px #3434ee">1.4140</div>
<div class="r" style="left:7.5px;top:215.13px;width:146.8px;height:11.57px;background:#e8e8e8;"></div>
<div class="r" style="left:80.4px;top:215.13px;width:0.8px;height:11.57px;background:#d9d9d9;"></div>
<div class="r" style="left:117.6px;top:215.13px;width:0.8px;height:11.57px;background:#d9d9d9;"></div>
<div class="r" style="left:7.5px;top:226.2px;width:146.8px;height:0.5px;background:#dcdcdc;"></div>
<svg class="r" style="left:11.8px;top:218.61px" width="4.5" height="4.5" viewBox="0 0 4.5 4.5"><path d="M0.5 3.9L3.8 0.6M1.4 0.5H3.9V3" fill="none" stroke="#30a850" stroke-width="0.8"/></svg>
<div class="t" style="left:20.7px;top:216.96px;font-size:8.0px;color:#2a2a2a;transform:scaleX(0.74);transform-origin:0 0;-webkit-text-stroke:0.2px #2a2a2a">EURTRY</div>
<div class="t" style="right:639px;text-align:right;top:216.66px;font-size:8.0px;color:#3434ee;transform:scaleX(0.76);transform-origin:100% 0;-webkit-text-stroke:0.15px #3434ee">37.44423</div>
<div class="t" style="right:602.2px;text-align:right;top:216.66px;font-size:8.0px;color:#3434ee;transform:scaleX(0.76);transform-origin:100% 0;-webkit-text-stroke:0.15px #3434ee">37.5214</div>
<div class="r" style="left:7.5px;top:226.7px;width:146.8px;height:11.57px;background:#fff;"></div>
<div class="r" style="left:80.4px;top:226.7px;width:0.8px;height:11.57px;background:#d9d9d9;"></div>
<div class="r" style="left:117.6px;top:226.7px;width:0.8px;height:11.57px;background:#d9d9d9;"></div>
<div class="r" style="left:7.5px;top:237.77px;width:146.8px;height:0.5px;background:#dcdcdc;"></div>
<svg class="r" style="left:11.8px;top:230.18px" width="4.5" height="4.5" viewBox="0 0 4.5 4.5"><path d="M0.5 3.9L3.8 0.6M1.4 0.5H3.9V3" fill="none" stroke="#30a850" stroke-width="0.8"/></svg>
<div class="t" style="left:20.7px;top:228.53px;font-size:8.0px;color:#2a2a2a;transform:scaleX(0.74);transform-origin:0 0;-webkit-text-stroke:0.2px #2a2a2a">EURZAR</div>
<div class="t" style="right:639px;text-align:right;top:228.23px;font-size:8.0px;color:#3434ee;transform:scaleX(0.76);transform-origin:100% 0;-webkit-text-stroke:0.15px #3434ee">19.24044</div>
<div class="t" style="right:602.2px;text-align:right;top:228.23px;font-size:8.0px;color:#3434ee;transform:scaleX(0.76);transform-origin:100% 0;-webkit-text-stroke:0.15px #3434ee">19.2614</div>
<div class="r" style="left:7.5px;top:238.27px;width:146.8px;height:11.57px;background:#e8e8e8;"></div>
<div class="r" style="left:80.4px;top:238.27px;width:0.8px;height:11.57px;background:#d9d9d9;"></div>
<div class="r" style="left:117.6px;top:238.27px;width:0.8px;height:11.57px;background:#d9d9d9;"></div>
<div class="r" style="left:7.5px;top:249.34px;width:146.8px;height:0.5px;background:#dcdcdc;"></div>
<svg class="r" style="left:11.8px;top:242.06px" width="4.5" height="4.5" viewBox="0 0 4.5 4.5"><path d="M0.5 0.5L3.8 3.8M3.9 1.4V3.9H1.4" fill="none" stroke="#e85050" stroke-width="0.8"/></svg>
<div class="t" style="left:20.7px;top:240.10px;font-size:8.0px;color:#2a2a2a;transform:scaleX(0.74);transform-origin:0 0;-webkit-text-stroke:0.2px #2a2a2a">GBPDKK</div>
<div class="t" style="right:639px;text-align:right;top:239.80px;font-size:8.0px;color:#f03232;transform:scaleX(0.76);transform-origin:100% 0;-webkit-text-stroke:0.15px #f03232">8.82915</div>
<div class="t" style="right:602.2px;text-align:right;top:239.80px;font-size:8.0px;color:#3434ee;transform:scaleX(0.76);transform-origin:100% 0;-webkit-text-stroke:0.15px #3434ee">8.8412</div>
<div class="r" style="left:7.5px;top:249.84px;width:146.8px;height:11.57px;background:#fff;"></div>
<div class="r" style="left:80.4px;top:249.84px;width:0.8px;height:11.57px;background:#d9d9d9;"></div>
<div class="r" style="left:117.6px;top:249.84px;width:0.8px;height:11.57px;background:#d9d9d9;"></div>
<div class="r" style="left:7.5px;top:260.91px;width:146.8px;height:0.5px;background:#dcdcdc;"></div>
<svg class="r" style="left:11.8px;top:253.32px" width="4.5" height="4.5" viewBox="0 0 4.5 4.5"><path d="M0.5 3.9L3.8 0.6M1.4 0.5H3.9V3" fill="none" stroke="#30a850" stroke-width="0.8"/></svg>
<div class="t" style="left:20.7px;top:251.67px;font-size:8.0px;color:#2a2a2a;transform:scaleX(0.74);transform-origin:0 0;-webkit-text-stroke:0.2px #2a2a2a">GBPNOK</div>
<div class="t" style="right:639px;text-align:right;top:251.37px;font-size:8.0px;color:#3434ee;transform:scaleX(0.76);transform-origin:100% 0;-webkit-text-stroke:0.15px #3434ee">13.92512</div>
<div class="t" style="right:602.2px;text-align:right;top:251.37px;font-size:8.0px;color:#3434ee;transform:scaleX(0.76);transform-origin:100% 0;-webkit-text-stroke:0.15px #3434ee">13.9423</div>
<div class="r" style="left:7.5px;top:261.41px;width:146.8px;height:11.57px;background:#e8e8e8;"></div>
<div class="r" style="left:80.4px;top:261.41px;width:0.8px;height:11.57px;background:#d9d9d9;"></div>
<div class="r" style="left:117.6px;top:261.41px;width:0.8px;height:11.57px;background:#d9d9d9;"></div>
<div class="r" style="left:7.5px;top:272.48px;width:146.8px;height:0.5px;background:#dcdcdc;"></div>
<svg class="r" style="left:11.8px;top:265.19px" width="4.5" height="4.5" viewBox="0 0 4.5 4.5"><path d="M0.5 0.5L3.8 3.8M3.9 1.4V3.9H1.4" fill="none" stroke="#e85050" stroke-width="0.8"/></svg>
<div class="t" style="left:20.7px;top:263.24px;font-size:8.0px;color:#2a2a2a;transform:scaleX(0.74);transform-origin:0 0;-webkit-text-stroke:0.2px #2a2a2a">GBPSEK</div>
<div class="t" style="right:639px;text-align:right;top:262.94px;font-size:8.0px;color:#3434ee;transform:scaleX(0.76);transform-origin:100% 0;-webkit-text-stroke:0.15px #3434ee">13.56059</div>
<div class="t" style="right:602.2px;text-align:right;top:262.94px;font-size:8.0px;color:#f03232;transform:scaleX(0.76);transform-origin:100% 0;-webkit-text-stroke:0.15px #f03232">13.5738</div>
<div class="r" style="left:7.5px;top:272.98px;width:146.8px;height:11.57px;background:#fff;"></div>
<div class="r" style="left:80.4px;top:272.98px;width:0.8px;height:11.57px;background:#d9d9d9;"></div>
<div class="r" style="left:117.6px;top:272.98px;width:0.8px;height:11.57px;background:#d9d9d9;"></div>
<div class="r" style="left:7.5px;top:284.05px;width:146.8px;height:0.5px;background:#dcdcdc;"></div>
<svg class="r" style="left:11.8px;top:276.77px" width="4.5" height="4.5" viewBox="0 0 4.5 4.5"><path d="M0.5 0.5L3.8 3.8M3.9 1.4V3.9H1.4" fill="none" stroke="#e85050" stroke-width="0.8"/></svg>
<div class="t" style="left:20.7px;top:274.81px;font-size:8.0px;color:#2a2a2a;transform:scaleX(0.74);transform-origin:0 0;-webkit-text-stroke:0.2px #2a2a2a">GBPSGD</div>
<div class="t" style="right:639px;text-align:right;top:274.51px;font-size:8.0px;color:#f03232;transform:scaleX(0.76);transform-origin:100% 0;-webkit-text-stroke:0.15px #f03232">1.67165</div>
<div class="t" style="right:602.2px;text-align:right;top:274.51px;font-size:8.0px;color:#3434ee;transform:scaleX(0.76);transform-origin:100% 0;-webkit-text-stroke:0.15px #3434ee">1.6750</div>
<div class="r" style="left:7.5px;top:284.55px;width:146.8px;height:11.57px;background:#e8e8e8;"></div>
<div class="r" style="left:80.4px;top:284.55px;width:0.8px;height:11.57px;background:#d9d9d9;"></div>
<div class="r" style="left:117.6px;top:284.55px;width:0.8px;height:11.57px;background:#d9d9d9;"></div>
<div class="r" style="left:7.5px;top:295.62px;width:146.8px;height:0.5px;background:#dcdcdc;"></div>
<svg class="r" style="left:11.8px;top:288.04px" width="4.5" height="4.5" viewBox="0 0 4.5 4.5"><path d="M0.5 3.9L3.8 0.6M1.4 0.5H3.9V3" fill="none" stroke="#30a850" stroke-width="0.8"/></svg>
<div class="t" style="left:20.7px;top:286.38px;font-size:8.0px;color:#2a2a2a;transform:scaleX(0.74);transform-origin:0 0;-webkit-text-stroke:0.2px #2a2a2a">NZDSGD</div>
<div class="t" style="right:639px;text-align:right;top:286.08px;font-size:8.0px;color:#3434ee;transform:scaleX(0.76);transform-origin:100% 0;-webkit-text-stroke:0.15px #3434ee">0.76768</div>
<div class="t" style="right:602.2px;text-align:right;top:286.08px;font-size:8.0px;color:#3434ee;transform:scaleX(0.76);transform-origin:100% 0;-webkit-text-stroke:0.15px #3434ee">0.7707</div>
<div class="r" style="left:7.5px;top:296.12px;width:146.8px;height:11.57px;background:#fff;"></div>
<div class="r" style="left:80.4px;top:296.12px;width:0.8px;height:11.57px;background:#d9d9d9;"></div>
<div class="r" style="left:117.6px;top:296.12px;width:0.8px;height:11.57px;background:#d9d9d9;"></div>
<div class="r" style="left:7.5px;top:307.19px;width:146.8px;height:0.5px;background:#dcdcdc;"></div>
<svg class="r" style="left:11.8px;top:299.91px" width="4.5" height="4.5" viewBox="0 0 4.5 4.5"><path d="M0.5 0.5L3.8 3.8M3.9 1.4V3.9H1.4" fill="none" stroke="#e85050" stroke-width="0.8"/></svg>
<div class="t" style="left:20.7px;top:297.95px;font-size:8.0px;color:#2a2a2a;transform:scaleX(0.74);transform-origin:0 0;-webkit-text-stroke:0.2px #2a2a2a">SGDJPY</div>
<div class="t" style="right:639px;text-align:right;top:297.65px;font-size:8.0px;color:#f03232;transform:scaleX(0.76);transform-origin:100% 0;-webkit-text-stroke:0.15px #f03232">115.379</div>
<div class="t" style="right:602.2px;text-align:right;top:297.65px;font-size:8.0px;color:#f03232;transform:scaleX(0.76);transform-origin:100% 0;-webkit-text-stroke:0.15px #f03232">115.61</div>
<div class="r" style="left:7.5px;top:307.69px;width:146.8px;height:11.57px;background:#e8e8e8;"></div>
<div class="r" style="left:80.4px;top:307.69px;width:0.8px;height:11.57px;background:#d9d9d9;"></div>
<div class="r" style="left:117.6px;top:307.69px;width:0.8px;height:11.57px;background:#d9d9d9;"></div>
<div class="r" style="left:7.5px;top:318.76px;width:146.8px;height:0.5px;background:#dcdcdc;"></div>
<svg class="r" style="left:11.8px;top:311.48px" width="4.5" height="4.5" viewBox="0 0 4.5 4.5"><path d="M0.5 0.5L3.8 3.8M3.9 1.4V3.9H1.4" fill="none" stroke="#e85050" stroke-width="0.8"/></svg>
<div class="t" style="left:20.7px;top:309.52px;font-size:8.0px;color:#2a2a2a;transform:scaleX(0.74);transform-origin:0 0;-webkit-text-stroke:0.2px #2a2a2a">USDCNH</div>
<div class="t" style="right:639px;text-align:right;top:309.22px;font-size:8.0px;color:#f03232;transform:scaleX(0.76);transform-origin:100% 0;-webkit-text-stroke:0.15px #f03232">7.2418</div>
<div class="t" style="right:602.2px;text-align:right;top:309.22px;font-size:8.0px;color:#f03232;transform:scaleX(0.76);transform-origin:100% 0;-webkit-text-stroke:0.15px #f03232">7.245</div>
<div class="r" style="left:7.5px;top:319.26px;width:146.8px;height:11.57px;background:#fff;"></div>
<div class="r" style="left:80.4px;top:319.26px;width:0.8px;height:11.57px;background:#d9d9d9;"></div>
<div class="r" style="left:117.6px;top:319.26px;width:0.8px;height:11.57px;background:#d9d9d9;"></div>
<div class="r" style="left:7.5px;top:330.33px;width:146.8px;height:0.5px;background:#dcdcdc;"></div>
<svg class="r" style="left:11.8px;top:322.75px" width="4.5" height="4.5" viewBox="0 0 4.5 4.5"><path d="M0.5 3.9L3.8 0.6M1.4 0.5H3.9V3" fill="none" stroke="#30a850" stroke-width="0.8"/></svg>
<div class="t" style="left:20.7px;top:321.09px;font-size:8.0px;color:#2a2a2a;transform:scaleX(0.74);transform-origin:0 0;-webkit-text-stroke:0.2px #2a2a2a">USDDKK</div>
<div class="t" style="right:639px;text-align:right;top:320.79px;font-size:8.0px;color:#3434ee;transform:scaleX(0.76);transform-origin:100% 0;-webkit-text-stroke:0.15px #3434ee">7.10929</div>
<div class="t" style="right:602.2px;text-align:right;top:320.79px;font-size:8.0px;color:#3434ee;transform:scaleX(0.76);transform-origin:100% 0;-webkit-text-stroke:0.15px #3434ee">7.1135</div>
<div class="r" style="left:7.5px;top:330.83px;width:146.8px;height:11.57px;background:#e8e8e8;"></div>
<div class="r" style="left:80.4px;top:330.83px;width:0.8px;height:11.57px;background:#d9d9d9;"></div>
<div class="r" style="left:117.6px;top:330.83px;width:0.8px;height:11.57px;background:#d9d9d9;"></div>
<div class="r" style="left:7.5px;top:341.9px;width:146.8px;height:0.5px;background:#dcdcdc;"></div>
<svg class="r" style="left:11.8px;top:334.62px" width="4.5" height="4.5" viewBox="0 0 4.5 4.5"><path d="M0.5 0.5L3.8 3.8M3.9 1.4V3.9H1.4" fill="none" stroke="#e85050" stroke-width="0.8"/></svg>
<div class="t" style="left:20.7px;top:332.66px;font-size:8.0px;color:#2a2a2a;transform:scaleX(0.74);transform-origin:0 0;-webkit-text-stroke:0.2px #2a2a2a">USDHKD</div>
<div class="t" style="right:639px;text-align:right;top:332.36px;font-size:8.0px;color:#333;transform:scaleX(0.76);transform-origin:100% 0;-webkit-text-stroke:0.15px #333">7.7861</div>
<div class="t" style="right:602.2px;text-align:right;top:332.36px;font-size:8.0px;color:#f03232;transform:scaleX(0.76);transform-origin:100% 0;-webkit-text-stroke:0.15px #f03232">7.790</div>
<div class="r" style="left:7.5px;top:342.4px;width:146.8px;height:11.57px;background:#fff;"></div>
<div class="r" style="left:80.4px;top:342.4px;width:0.8px;height:11.57px;background:#d9d9d9;"></div>
<div class="r" style="left:117.6px;top:342.4px;width:0.8px;height:11.57px;background:#d9d9d9;"></div>
<div class="r" style="left:7.5px;top:353.47px;width:146.8px;height:0.5px;background:#dcdcdc;"></div>
<svg class="r" style="left:11.8px;top:346.19px" width="4.5" height="4.5" viewBox="0 0 4.5 4.5"><path d="M0.5 0.5L3.8 3.8M3.9 1.4V3.9H1.4" fill="none" stroke="#e85050" stroke-width="0.8"/></svg>
<div class="t" style="left:20.7px;top:344.23px;font-size:8.0px;color:#2a2a2a;transform:scaleX(0.74);transform-origin:0 0;-webkit-text-stroke:0.2px #2a2a2a">USDHUF</div>
<div class="t" style="right:639px;text-align:right;top:343.93px;font-size:8.0px;color:#f03232;transform:scaleX(0.76);transform-origin:100% 0;-webkit-text-stroke:0.15px #f03232">389.752</div>
<div class="t" style="right:602.2px;text-align:right;top:343.93px;font-size:8.0px;color:#f03232;transform:scaleX(0.76);transform-origin:100% 0;-webkit-text-stroke:0.15px #f03232">390.41</div>
<div class="r" style="left:7.5px;top:353.97px;width:146.8px;height:11.57px;background:#e8e8e8;"></div>
<div class="r" style="left:80.4px;top:353.97px;width:0.8px;height:11.57px;background:#d9d9d9;"></div>
<div class="r" style="left:117.6px;top:353.97px;width:0.8px;height:11.57px;background:#d9d9d9;"></div>
<div class="r" style="left:7.5px;top:365.04px;width:146.8px;height:0.5px;background:#dcdcdc;"></div>
<svg class="r" style="left:11.8px;top:357.76px" width="4.5" height="4.5" viewBox="0 0 4.5 4.5"><path d="M0.5 0.5L3.8 3.8M3.9 1.4V3.9H1.4" fill="none" stroke="#e85050" stroke-width="0.8"/></svg>
<div class="t" style="left:20.7px;top:355.80px;font-size:8.0px;color:#2a2a2a;transform:scaleX(0.74);transform-origin:0 0;-webkit-text-stroke:0.2px #2a2a2a">USDMXN</div>
<div class="t" style="right:639px;text-align:right;top:355.50px;font-size:8.0px;color:#f03232;transform:scaleX(0.76);transform-origin:100% 0;-webkit-text-stroke:0.15px #f03232">20.25307</div>
<div class="t" style="right:602.2px;text-align:right;top:355.50px;font-size:8.0px;color:#f03232;transform:scaleX(0.76);transform-origin:100% 0;-webkit-text-stroke:0.15px #f03232">20.2786</div>
<div class="r" style="left:7.5px;top:365.54px;width:146.8px;height:11.57px;background:#fff;"></div>
<div class="r" style="left:80.4px;top:365.54px;width:0.8px;height:11.57px;background:#d9d9d9;"></div>
<div class="r" style="left:117.6px;top:365.54px;width:0.8px;height:11.57px;background:#d9d9d9;"></div>
<div class="r" style="left:7.5px;top:376.61px;width:146.8px;height:0.5px;background:#dcdcdc;"></div>
<svg class="r" style="left:11.8px;top:369.33px" width="4.5" height="4.5" viewBox="0 0 4.5 4.5"><path d="M0.5 0.5L3.8 3.8M3.9 1.4V3.9H1.4" fill="none" stroke="#e85050" stroke-width="0.8"/></svg>
<div class="t" style="left:20.7px;top:367.37px;font-size:8.0px;color:#2a2a2a;transform:scaleX(0.74);transform-origin:0 0;-webkit-text-stroke:0.2px #2a2a2a">USDNOK</div>
<div class="t" style="right:639px;text-align:right;top:367.07px;font-size:8.0px;color:#f03232;transform:scaleX(0.76);transform-origin:100% 0;-webkit-text-stroke:0.15px #f03232">11.20542</div>
<div class="t" style="right:602.2px;text-align:right;top:367.07px;font-size:8.0px;color:#f03232;transform:scaleX(0.76);transform-origin:100% 0;-webkit-text-stroke:0.15px #f03232">11.2247</div>
<div class="r" style="left:7.5px;top:377.11px;width:146.8px;height:11.57px;background:#e8e8e8;"></div>
<div class="r" style="left:80.4px;top:377.11px;width:0.8px;height:11.57px;background:#d9d9d9;"></div>
<div class="r" style="left:117.6px;top:377.11px;width:0.8px;height:11.57px;background:#d9d9d9;"></div>
<div class="r" style="left:7.5px;top:388.18px;width:146.8px;height:0.5px;background:#dcdcdc;"></div>
<svg class="r" style="left:11.8px;top:380.9px" width="4.5" height="4.5" viewBox="0 0 4.5 4.5"><path d="M0.5 0.5L3.8 3.8M3.9 1.4V3.9H1.4" fill="none" stroke="#e85050" stroke-width="0.8"/></svg>
<div class="t" style="left:20.7px;top:378.94px;font-size:8.0px;color:#2a2a2a;transform:scaleX(0.74);transform-origin:0 0;-webkit-text-stroke:0.2px #2a2a2a">USDPLN</div>
<div class="t" style="right:639px;text-align:right;top:378.64px;font-size:8.0px;color:#f03232;transform:scaleX(0.76);transform-origin:100% 0;-webkit-text-stroke:0.15px #f03232">4.01111</div>
<div class="t" style="right:602.2px;text-align:right;top:378.64px;font-size:8.0px;color:#f03232;transform:scaleX(0.76);transform-origin:100% 0;-webkit-text-stroke:0.15px #f03232">4.0158</div>
<div class="r" style="left:7.5px;top:388.68px;width:146.8px;height:11.57px;background:#fff;"></div>
<div class="r" style="left:80.4px;top:388.68px;width:0.8px;height:11.57px;background:#d9d9d9;"></div>
<div class="r" style="left:117.6px;top:388.68px;width:0.8px;height:11.57px;background:#d9d9d9;"></div>
<div class="r" style="left:7.5px;top:399.75px;width:146.8px;height:0.5px;background:#dcdcdc;"></div>
<svg class="r" style="left:11.8px;top:392.17px" width="4.5" height="4.5" viewBox="0 0 4.5 4.5"><path d="M0.5 3.9L3.8 0.6M1.4 0.5H3.9V3" fill="none" stroke="#30a850" stroke-width="0.8"/></svg>
<div class="t" style="left:20.7px;top:390.51px;font-size:8.0px;color:#2a2a2a;transform:scaleX(0.74);transform-origin:0 0;-webkit-text-stroke:0.2px #2a2a2a">USDSEK</div>
<div class="t" style="right:639px;text-align:right;top:390.21px;font-size:8.0px;color:#3434ee;transform:scaleX(0.76);transform-origin:100% 0;-webkit-text-stroke:0.15px #3434ee">10.91259</div>
<div class="t" style="right:602.2px;text-align:right;top:390.21px;font-size:8.0px;color:#3434ee;transform:scaleX(0.76);transform-origin:100% 0;-webkit-text-stroke:0.15px #3434ee">10.92547</div>
<div class="r" style="left:7.5px;top:400.25px;width:146.8px;height:11.57px;background:#e8e8e8;"></div>
<div class="r" style="left:80.4px;top:400.25px;width:0.8px;height:11.57px;background:#d9d9d9;"></div>
<div class="r" style="left:117.6px;top:400.25px;width:0.8px;height:11.57px;background:#d9d9d9;"></div>
<div class="r" style="left:7.5px;top:411.32px;width:146.8px;height:0.5px;background:#dcdcdc;"></div>
<svg class="r" style="left:11.8px;top:403.74px" width="4.5" height="4.5" viewBox="0 0 4.5 4.5"><path d="M0.5 3.9L3.8 0.6M1.4 0.5H3.9V3" fill="none" stroke="#30a850" stroke-width="0.8"/></svg>
<div class="t" style="left:20.7px;top:402.08px;font-size:8.0px;color:#2a2a2a;transform:scaleX(0.74);transform-origin:0 0;-webkit-text-stroke:0.2px #2a2a2a">USDSGD</div>
<div class="t" style="right:639px;text-align:right;top:401.78px;font-size:8.0px;color:#3434ee;transform:scaleX(0.76);transform-origin:100% 0;-webkit-text-stroke:0.15px #3434ee">1.34569</div>
<div class="t" style="right:602.2px;text-align:right;top:401.78px;font-size:8.0px;color:#3434ee;transform:scaleX(0.76);transform-origin:100% 0;-webkit-text-stroke:0.15px #3434ee">1.34789</div>
<div class="r" style="left:7.5px;top:411.82px;width:146.8px;height:11.57px;background:#fff;"></div>
<div class="r" style="left:80.4px;top:411.82px;width:0.8px;height:11.57px;background:#d9d9d9;"></div>
<div class="r" style="left:117.6px;top:411.82px;width:0.8px;height:11.57px;background:#d9d9d9;"></div>
<div class="r" style="left:7.5px;top:422.89px;width:146.8px;height:0.5px;background:#dcdcdc;"></div>
<svg class="r" style="left:11.8px;top:415.31px" width="4.5" height="4.5" viewBox="0 0 4.5 4.5"><path d="M0.5 3.9L3.8 0.6M1.4 0.5H3.9V3" fill="none" stroke="#30a850" stroke-width="0.8"/></svg>
<div class="t" style="left:20.7px;top:413.65px;font-size:8.0px;color:#2a2a2a;transform:scaleX(0.74);transform-origin:0 0;-webkit-text-stroke:0.2px #2a2a2a">USDTRY</div>
<div class="t" style="right:639px;text-align:right;top:413.35px;font-size:8.0px;color:#3434ee;transform:scaleX(0.76);transform-origin:100% 0;-webkit-text-stroke:0.15px #3434ee">35.67038</div>
<div class="t" style="right:602.2px;text-align:right;top:413.35px;font-size:8.0px;color:#f03232;transform:scaleX(0.76);transform-origin:100% 0;-webkit-text-stroke:0.15px #f03232">35.72287</div>
<div class="r" style="left:7.5px;top:423.39px;width:146.8px;height:11.57px;background:#e8e8e8;"></div>
<div class="r" style="left:80.4px;top:423.39px;width:0.8px;height:11.57px;background:#d9d9d9;"></div>
<div class="r" style="left:117.6px;top:423.39px;width:0.8px;height:11.57px;background:#d9d9d9;"></div>
<div class="r" style="left:7.5px;top:434.46px;width:146.8px;height:0.5px;background:#dcdcdc;"></div>
<svg class="r" style="left:11.8px;top:427.18px" width="4.5" height="4.5" viewBox="0 0 4.5 4.5"><path d="M0.5 0.5L3.8 3.8M3.9 1.4V3.9H1.4" fill="none" stroke="#e85050" stroke-width="0.8"/></svg>
<div class="t" style="left:20.7px;top:425.22px;font-size:8.0px;color:#2a2a2a;transform:scaleX(0.74);transform-origin:0 0;-webkit-text-stroke:0.2px #2a2a2a">USDZAR</div>
<div class="t" style="right:639px;text-align:right;top:424.92px;font-size:8.0px;color:#f03232;transform:scaleX(0.76);transform-origin:100% 0;-webkit-text-stroke:0.15px #f03232">18.3411</div>
<div class="t" style="right:602.2px;text-align:right;top:424.92px;font-size:8.0px;color:#f03232;transform:scaleX(0.76);transform-origin:100% 0;-webkit-text-stroke:0.15px #f03232">18.3570</div>
<div class="r" style="left:7.5px;top:434.96px;width:146.8px;height:11.57px;background:#fff;"></div>
<div class="r" style="left:80.4px;top:434.96px;width:0.8px;height:11.57px;background:#d9d9d9;"></div>
<div class="r" style="left:117.6px;top:434.96px;width:0.8px;height:11.57px;background:#d9d9d9;"></div>
<div class="r" style="left:7.5px;top:446.03px;width:146.8px;height:0.5px;background:#dcdcdc;"></div>
<svg class="r" style="left:11.8px;top:438.75px" width="4.5" height="4.5" viewBox="0 0 4.5 4.5"><path d="M0.5 0.5L3.8 3.8M3.9 1.4V3.9H1.4" fill="none" stroke="#e85050" stroke-width="0.8"/></svg>
<div class="t" style="left:20.7px;top:436.79px;font-size:8.0px;color:#2a2a2a;transform:scaleX(0.74);transform-origin:0 0;-webkit-text-stroke:0.2px #2a2a2a">CADCHF</div>
<div class="t" style="right:639px;text-align:right;top:436.49px;font-size:8.0px;color:#3434ee;transform:scaleX(0.76);transform-origin:100% 0;-webkit-text-stroke:0.15px #3434ee">0.63081</div>
<div class="t" style="right:602.2px;text-align:right;top:436.49px;font-size:8.0px;color:#f03232;transform:scaleX(0.76);transform-origin:100% 0;-webkit-text-stroke:0.15px #f03232">0.63124</div>
<div class="r" style="left:7.5px;top:446.53px;width:146.8px;height:11.57px;background:#e8e8e8;"></div>
<div class="r" style="left:80.4px;top:446.53px;width:0.8px;height:11.57px;background:#d9d9d9;"></div>
<div class="r" style="left:117.6px;top:446.53px;width:0.8px;height:11.57px;background:#d9d9d9;"></div>
<div class="r" style="left:7.5px;top:457.6px;width:146.8px;height:0.5px;background:#dcdcdc;"></div>
<svg class="r" style="left:11.8px;top:450.32px" width="4.5" height="4.5" viewBox="0 0 4.5 4.5"><path d="M0.5 0.5L3.8 3.8M3.9 1.4V3.9H1.4" fill="none" stroke="#e85050" stroke-width="0.8"/></svg>
<div class="t" style="left:20.7px;top:448.36px;font-size:8.0px;color:#2a2a2a;transform:scaleX(0.74);transform-origin:0 0;-webkit-text-stroke:0.2px #2a2a2a">CADJPY</div>
<div class="t" style="right:639px;text-align:right;top:448.06px;font-size:8.0px;color:#f03232;transform:scaleX(0.76);transform-origin:100% 0;-webkit-text-stroke:0.15px #f03232">108.545</div>
<div class="t" style="right:602.2px;text-align:right;top:448.06px;font-size:8.0px;color:#f03232;transform:scaleX(0.76);transform-origin:100% 0;-webkit-text-stroke:0.15px #f03232">108.587</div>
<div class="r" style="left:7.5px;top:458.1px;width:146.8px;height:11.57px;background:#fff;"></div>
<div class="r" style="left:80.4px;top:458.1px;width:0.8px;height:11.57px;background:#d9d9d9;"></div>
<div class="r" style="left:117.6px;top:458.1px;width:0.8px;height:11.57px;background:#d9d9d9;"></div>
<div class="r" style="left:7.5px;top:469.17px;width:146.8px;height:0.5px;background:#dcdcdc;"></div>
<svg class="r" style="left:11.8px;top:461.59px" width="4.5" height="4.5" viewBox="0 0 4.5 4.5"><path d="M0.5 3.9L3.8 0.6M1.4 0.5H3.9V3" fill="none" stroke="#30a850" stroke-width="0.8"/></svg>
<div class="t" style="left:20.7px;top:459.93px;font-size:8.0px;color:#2a2a2a;transform:scaleX(0.74);transform-origin:0 0;-webkit-text-stroke:0.2px #2a2a2a">CHFJPY</div>
<div class="t" style="right:639px;text-align:right;top:459.63px;font-size:8.0px;color:#f03232;transform:scaleX(0.76);transform-origin:100% 0;-webkit-text-stroke:0.15px #f03232">172.026</div>
<div class="t" style="right:602.2px;text-align:right;top:459.63px;font-size:8.0px;color:#3434ee;transform:scaleX(0.76);transform-origin:100% 0;-webkit-text-stroke:0.15px #3434ee">172.066</div>
<div class="r" style="left:7.5px;top:469.67px;width:146.8px;height:11.57px;background:#e8e8e8;"></div>
<div class="r" style="left:80.4px;top:469.67px;width:0.8px;height:11.57px;background:#d9d9d9;"></div>
<div class="r" style="left:117.6px;top:469.67px;width:0.8px;height:11.57px;background:#d9d9d9;"></div>
<div class="r" style="left:7.5px;top:480.74px;width:146.8px;height:0.5px;background:#dcdcdc;"></div>
<svg class="r" style="left:11.8px;top:473.46px" width="4.5" height="4.5" viewBox="0 0 4.5 4.5"><path d="M0.5 0.5L3.8 3.8M3.9 1.4V3.9H1.4" fill="none" stroke="#e85050" stroke-width="0.8"/></svg>
<div class="t" style="left:20.7px;top:471.50px;font-size:8.0px;color:#2a2a2a;transform:scaleX(0.74);transform-origin:0 0;-webkit-text-stroke:0.2px #2a2a2a">EURCAD</div>
<div class="t" style="right:639px;text-align:right;top:471.20px;font-size:8.0px;color:#f03232;transform:scaleX(0.76);transform-origin:100% 0;-webkit-text-stroke:0.15px #f03232">1.50304</div>
<div class="t" style="right:602.2px;text-align:right;top:471.20px;font-size:8.0px;color:#f03232;transform:scaleX(0.76);transform-origin:100% 0;-webkit-text-stroke:0.15px #f03232">1.50340</div>
<div class="r" style="left:7.5px;top:481.24px;width:146.8px;height:11.57px;background:#fff;"></div>
<div class="r" style="left:80.4px;top:481.24px;width:0.8px;height:11.57px;background:#d9d9d9;"></div>
<div class="r" style="left:117.6px;top:481.24px;width:0.8px;height:11.57px;background:#d9d9d9;"></div>
<div class="r" style="left:7.5px;top:492.31px;width:146.8px;height:0.5px;background:#dcdcdc;"></div>
<svg class="r" style="left:11.8px;top:484.73px" width="4.5" height="4.5" viewBox="0 0 4.5 4.5"><path d="M0.5 3.9L3.8 0.6M1.4 0.5H3.9V3" fill="none" stroke="#30a850" stroke-width="0.8"/></svg>
<div class="t" style="left:20.7px;top:483.07px;font-size:8.0px;color:#2a2a2a;transform:scaleX(0.74);transform-origin:0 0;-webkit-text-stroke:0.2px #2a2a2a">EURCHF</div>
<div class="t" style="right:639px;text-align:right;top:482.77px;font-size:8.0px;color:#3434ee;transform:scaleX(0.76);transform-origin:100% 0;-webkit-text-stroke:0.15px #3434ee">0.94842</div>
<div class="t" style="right:602.2px;text-align:right;top:482.77px;font-size:8.0px;color:#3434ee;transform:scaleX(0.76);transform-origin:100% 0;-webkit-text-stroke:0.15px #3434ee">0.94877</div>
<div class="r" style="left:7.5px;top:492.81px;width:146.8px;height:11.57px;background:#e8e8e8;"></div>
<div class="r" style="left:80.4px;top:492.81px;width:0.8px;height:11.57px;background:#d9d9d9;"></div>
<div class="r" style="left:117.6px;top:492.81px;width:0.8px;height:11.57px;background:#d9d9d9;"></div>
<div class="r" style="left:7.5px;top:503.88px;width:146.8px;height:0.5px;background:#dcdcdc;"></div>
<svg class="r" style="left:11.8px;top:496.6px" width="4.5" height="4.5" viewBox="0 0 4.5 4.5"><path d="M0.5 0.5L3.8 3.8M3.9 1.4V3.9H1.4" fill="none" stroke="#e85050" stroke-width="0.8"/></svg>
<div class="t" style="left:20.7px;top:494.64px;font-size:8.0px;color:#2a2a2a;transform:scaleX(0.74);transform-origin:0 0;-webkit-text-stroke:0.2px #2a2a2a">EURGBP</div>
<div class="t" style="right:639px;text-align:right;top:494.34px;font-size:8.0px;color:#f03232;transform:scaleX(0.76);transform-origin:100% 0;-webkit-text-stroke:0.15px #f03232">0.84428</div>
<div class="t" style="right:602.2px;text-align:right;top:494.34px;font-size:8.0px;color:#f03232;transform:scaleX(0.76);transform-origin:100% 0;-webkit-text-stroke:0.15px #f03232">0.84454</div>
<div class="r" style="left:7.5px;top:504.38px;width:146.8px;height:11.57px;background:#fff;"></div>
<div class="r" style="left:80.4px;top:504.38px;width:0.8px;height:11.57px;background:#d9d9d9;"></div>
<div class="r" style="left:117.6px;top:504.38px;width:0.8px;height:11.57px;background:#d9d9d9;"></div>
<div class="r" style="left:7.5px;top:515.45px;width:146.8px;height:0.5px;background:#dcdcdc;"></div>
<svg class="r" style="left:11.8px;top:508.17px" width="4.5" height="4.5" viewBox="0 0 4.5 4.5"><path d="M0.5 0.5L3.8 3.8M3.9 1.4V3.9H1.4" fill="none" stroke="#e85050" stroke-width="0.8"/></svg>
<div class="t" style="left:20.7px;top:506.21px;font-size:8.0px;color:#2a2a2a;transform:scaleX(0.74);transform-origin:0 0;-webkit-text-stroke:0.2px #2a2a2a">EURJPY</div>
<div class="t" style="right:639px;text-align:right;top:505.91px;font-size:8.0px;color:#f03232;transform:scaleX(0.76);transform-origin:100% 0;-webkit-text-stroke:0.15px #f03232">163.183</div>
<div class="t" style="right:602.2px;text-align:right;top:505.91px;font-size:8.0px;color:#f03232;transform:scaleX(0.76);transform-origin:100% 0;-webkit-text-stroke:0.15px #f03232">163.218</div>
<div class="r" style="left:154.3px;top:110.7px;width:6.7px;height:406px;background:#f4f4f4;"></div>
<div class="r" style="left:159.4px;top:108px;width:0.8px;height:16px;background:#b0b0b0;"></div>
<div class="r" style="left:3px;top:82px;width:162px;height:438px;box-sizing:border-box;border:4.6px solid #ef9229;border-radius:11px;"></div>
<div class="r" style="left:149.2px;top:112.3px;width:137.0px;height:273.7px;background:#f0f0f0;box-sizing:border-box;border:0.8px solid #a8a8a8;box-shadow:1px 1px 1.5px rgba(0,0,0,0.35)"></div>
<div class="t " style="left:167.2px;top:117.78px;font-size:6.9px;color:#262626;"><i class="j">新</i><i class="j">規</i><i class="j">注</i><i class="j">文</i> (N)</div>
<svg class="r" style="left:154.6px;top:115.30000000000001px" width="8" height="11" viewBox="0 0 8 11"><path d="M0.6 0.6H7V8.6L5 10.4H0.6Z" fill="#fff" stroke="#2d78c8" stroke-width="1"/><path d="M3.8 2.8V7.4M1.5 5.1H6.1" stroke="#2d78c8" stroke-width="0.9"/></svg>
<div class="t " style="left:167.2px;top:131.08px;font-size:6.9px;color:#262626;"><i class="k">チ</i><i class="k">ャ</i><i class="k">ー</i><i class="k">ト</i><i class="k">ウ</i><i class="k">イ</i><i class="k">ン</i><i class="k">ド</i><i class="k">ウ</i> (C)</div>
<svg class="r" style="left:154.3px;top:129.2px" width="9" height="9" viewBox="0 0 9 9"><path d="M0.6 0.5V8.4H8.8" fill="none" stroke="#999" stroke-width="0.8"/><path d="M1.8 5L3.8 2.6L5.6 4.4L8.2 2" fill="none" stroke="#2d78c8" stroke-width="1"/></svg>
<div class="t " style="left:167.2px;top:144.38px;font-size:6.9px;color:#262626;"><i class="k">テ</i><i class="k">ィ</i><i class="k">ッ</i><i class="k">ク</i><i class="k">チ</i><i class="k">ャ</i><i class="k">ー</i><i class="k">ト</i> (T)</div>
<svg class="r" style="left:154px;top:143.5px" width="9" height="7" viewBox="0 0 9 7"><path d="M0.3 4H2L3.2 1.2L4.6 5.8L5.8 3H8.7" fill="none" stroke="#2d78c8" stroke-width="1"/></svg>
<div class="t " style="left:167.2px;top:157.68px;font-size:6.9px;color:#262626;"><i class="j">板</i><i class="j">注</i><i class="j">文</i><i class="j">画</i><i class="j">面</i> (D)</div>
<div class="t" style="right:472.8px;top:157.69px;font-size:7.4px;color:#262626;text-align:right;">Alt+B</div>
<svg class="r" style="left:154.6px;top:155.8px" width="9" height="9" viewBox="0 0 9 9"><rect x="0" y="0" width="4" height="9" fill="#e05040"/><rect x="4.6" y="0" width="4" height="9" fill="#3a78c8"/><path d="M0 3H8.6M0 6H8.6" stroke="#fff" stroke-width="0.8"/></svg>
<div class="t " style="left:167.2px;top:170.98px;font-size:6.9px;color:#9a9a9a;"><i class="k">オ</i><i class="k">プ</i><i class="k">シ</i><i class="k">ョ</i><i class="k">ン</i><i class="k">ボ</i><i class="k">ー</i><i class="k">ド</i> (O)</div>
<svg class="r" style="left:154.3px;top:169.1px" width="9" height="9" viewBox="0 0 9 9"><path d="M0.5 0.5L8.5 8.5M8.5 0.5L0.5 8.5M0.5 4.5Q4.5 2 8.5 4.5" fill="none" stroke="#b8b8b8" stroke-width="0.8"/></svg>
<div class="t " style="left:167.2px;top:184.28px;font-size:6.9px;color:#262626;"><i class="j">仕</i><i class="j">様</i> (P)</div>
<svg class="r" style="left:154.6px;top:182.4px" width="9" height="9.5" viewBox="0 0 9 9.5"><rect x="0.5" y="0.5" width="8" height="8.5" rx="1" fill="#d6e6f6" stroke="#2d78c8" stroke-width="1"/><path d="M0.5 3H8.5M2.3 5H6.7M2.3 7H6.7" stroke="#2d78c8" stroke-width="0.8"/></svg>
<div class="t " style="left:167.2px;top:197.58px;font-size:6.9px;color:#262626;"><i class="k">ポ</i><i class="k">ッ</i><i class="k">プ</i><i class="k">ア</i><i class="k">ッ</i><i class="k">プ</i><i class="k">プ</i><i class="k">ラ</i><i class="k">イ</i><i class="k">ス</i> (o)</div>
<div class="t" style="right:472.8px;top:197.59px;font-size:7.4px;color:#262626;text-align:right;">F10</div>
<svg class="r" style="left:154.6px;top:195.7px" width="9" height="9.5" viewBox="0 0 9 9.5"><rect x="0.5" y="0.5" width="8" height="8.5" fill="#bcd8ec" stroke="#2d78c8" stroke-width="0.9"/><circle cx="3.5" cy="4" r="1.8" fill="#48a048"/><circle cx="6" cy="6.5" r="1.8" fill="#e06040"/></svg>
<div class="t " style="left:167.2px;top:216.58px;font-size:6.9px;color:#9a9a9a;"><i class="j">非</i><i class="j">表</i><i class="j">示</i> (I)</div>
<div class="t" style="right:472.8px;top:216.59px;font-size:7.4px;color:#9a9a9a;text-align:right;">Delete</div>
<div class="t " style="left:167.2px;top:229.88px;font-size:6.9px;color:#262626;"><i class="j">全</i><i class="k">て</i><i class="j">非</i><i class="j">表</i><i class="j">示</i> (H)</div>
<div class="t " style="left:167.2px;top:243.18px;font-size:6.9px;color:#262626;"><i class="j">全</i><i class="k">て</i><i class="j">表</i><i class="j">示</i> (S)</div>
<div class="t " style="left:167.2px;top:256.48px;font-size:6.9px;color:#262626;"><i class="j">銘</i><i class="j">柄</i><i class="j">一</i><i class="j">覧</i> (Y)</div>
<div class="t" style="right:472.8px;top:256.49px;font-size:7.4px;color:#262626;text-align:right;">Ctrl+U</div>
<svg class="r" style="left:154.6px;top:254.60000000000002px" width="9" height="9.5" viewBox="0 0 9 9.5"><rect x="0" y="0" width="9" height="9.5" fill="#f0b800"/><path d="M4.5 2V7.5M3 3.5H6M3 5.8H6" stroke="#8a6a00" stroke-width="0.8"/></svg>
<div class="t " style="left:167.2px;top:269.78px;font-size:6.9px;color:#262626;"><i class="k">セ</i><i class="k">ッ</i><i class="k">ト</i></div>
<svg class="r" style="left:277.5px;top:270.4px" width="4" height="5" viewBox="0 0 4 5"><path d="M0.5 0.5L3.5 2.5L0.5 4.5Z" fill="#333"/></svg>
<div class="t " style="left:167.2px;top:283.08px;font-size:6.9px;color:#262626;"><i class="k">ソ</i><i class="k">ー</i><i class="k">ト</i></div>
<svg class="r" style="left:277.5px;top:283.7px" width="4" height="5" viewBox="0 0 4 5"><path d="M0.5 0.5L3.5 2.5L0.5 4.5Z" fill="#333"/></svg>
<div class="t " style="left:167.2px;top:296.38px;font-size:6.9px;color:#262626;"><i class="k">エ</i><i class="k">ク</i><i class="k">ス</i><i class="k">ポ</i><i class="k">ー</i><i class="k">ト</i> (X)</div>
<svg class="r" style="left:154.3px;top:294.5px" width="10" height="10" viewBox="0 0 10 10"><circle cx="4.5" cy="5.2" r="3.8" fill="none" stroke="#3aae4a" stroke-width="1"/><path d="M4.5 5.2L9 0.8M6.2 0.6H9.2V3.6" fill="none" stroke="#3aae4a" stroke-width="1"/></svg>
<div class="t " style="left:167.2px;top:315.68px;font-size:6.9px;color:#262626;"><i class="k">ミ</i><i class="k">リ</i><i class="j">秒</i><i class="k">を</i><i class="j">表</i><i class="j">示</i><i class="k">す</i><i class="k">る</i> (M)</div>
<div class="t " style="left:167.2px;top:328.98px;font-size:6.9px;color:#262626;"><i class="j">自</i><i class="j">動</i><i class="j">削</i><i class="j">除</i> (E)</div>
<svg class="r" style="left:154.8px;top:328.40000000000003px" width="7" height="6" viewBox="0 0 7 6"><path d="M0.6 3.2L2.6 5.2L6.4 0.8" fill="none" stroke="#222" stroke-width="1.2"/></svg>
<div class="t " style="left:167.2px;top:342.28px;font-size:6.9px;color:#262626;"><i class="j">自</i><i class="j">動</i><i class="j">整</i><i class="j">列</i> (A)</div>
<svg class="r" style="left:154.8px;top:341.7px" width="7" height="6" viewBox="0 0 7 6"><path d="M0.6 3.2L2.6 5.2L6.4 0.8" fill="none" stroke="#222" stroke-width="1.2"/></svg>
<div class="t " style="left:167.2px;top:355.58px;font-size:6.9px;color:#262626;"><i class="k">グ</i><i class="k">リ</i><i class="k">ッ</i><i class="k">ド</i> (G)</div>
<svg class="r" style="left:154.8px;top:355.0px" width="7" height="6" viewBox="0 0 7 6"><path d="M0.6 3.2L2.6 5.2L6.4 0.8" fill="none" stroke="#222" stroke-width="1.2"/></svg>
<div class="r" style="left:152px;top:209.6px;width:131px;height:0.8px;background:#d2d2d2;"></div>
<div class="r" style="left:152px;top:308.6px;width:131px;height:0.8px;background:#d2d2d2;"></div>
<div class="r" style="left:282.6px;top:367.7px;width:369.0px;height:149.09999999999997px;background:#f0f0f0;box-sizing:border-box;border:0.8px solid #a8a8a8;box-shadow:1px 1px 1.5px rgba(0,0,0,0.35)"></div>
<div class="t " style="left:300.6px;top:372.96px;font-size:6.6px;color:#2a2a2a;"><i class="j">直</i><i class="j">近</i><i class="j">価</i><i class="j">格</i></div>
<div class="t " style="left:300.6px;top:386.26px;font-size:6.6px;color:#2a2a2a;"><i class="j">高</i><i class="j">値</i>/<i class="j">安</i><i class="j">値</i></div>
<div class="t " style="left:300.6px;top:426.16px;font-size:6.6px;color:#2a2a2a;"><i class="j">時</i><i class="j">間</i></div>
<div class="t " style="left:300.6px;top:439.46px;font-size:6.6px;color:#2a2a2a;"><i class="j">毎</i><i class="j">日</i><i class="k">の</i><i class="j">変</i><i class="j">化</i></div>
<div class="t " style="left:300.6px;top:452.76px;font-size:6.6px;color:#2a2a2a;"><i class="k">ソ</i><i class="k">ー</i><i class="k">ス</i></div>
<div class="t " style="left:300.6px;top:466.06px;font-size:6.6px;color:#2a2a2a;"><i class="k">テ</i><i class="k">ィ</i><i class="k">ッ</i><i class="k">ク</i><i class="k">サ</i><i class="k">イ</i><i class="k">ズ</i></div>
<div class="t " style="left:300.6px;top:479.36px;font-size:6.6px;color:#2a2a2a;"><i class="k">テ</i><i class="k">ィ</i><i class="k">ッ</i><i class="k">ク</i><i class="k">バ</i><i class="k">リ</i><i class="k">ュ</i><i class="k">ー</i></div>
<div class="t " style="left:300.6px;top:492.66px;font-size:6.6px;color:#2a2a2a;"><i class="j">額</i><i class="j">面</i><i class="j">価</i><i class="j">格</i></div>
<div class="t " style="left:368.0px;top:372.96px;font-size:6.6px;color:#2a2a2a;"><i class="j">未</i><i class="j">払</i><i class="j">利</i><i class="j">子</i></div>
<div class="t " style="left:368.0px;top:386.26px;font-size:6.6px;color:#2a2a2a;"><i class="j">必</i><i class="j">要</i><i class="j">証</i><i class="j">拠</i><i class="j">金</i></div>
<div class="t " style="left:368.0px;top:399.56px;font-size:6.6px;color:#2a2a2a;"><i class="j">維</i><i class="j">持</i><i class="j">証</i><i class="j">拠</i><i class="j">金</i></div>
<div class="t " style="left:368.0px;top:412.86px;font-size:6.6px;color:#2a2a2a;"><i class="j">当</i><i class="j">初</i><i class="j">買</i><i class="k">い</i><i class="j">証</i><i class="j">拠</i><i class="j">金</i></div>
<div class="t " style="left:368.0px;top:426.16px;font-size:6.6px;color:#2a2a2a;"><i class="j">当</i><i class="j">初</i><i class="j">売</i><i class="k">り</i><i class="j">証</i><i class="j">拠</i><i class="j">金</i></div>
<div class="t " style="left:368.0px;top:439.46px;font-size:6.6px;color:#2a2a2a;"><i class="j">下</i><i class="j">限</i></div>
<div class="t " style="left:368.0px;top:452.76px;font-size:6.6px;color:#2a2a2a;"><i class="j">上</i><i class="j">限</i></div>
<div class="t " style="left:368.0px;top:466.06px;font-size:6.6px;color:#2a2a2a;"><i class="j">精</i><i class="j">算</i><i class="j">価</i><i class="j">格</i></div>
<div class="t " style="left:444.2px;top:372.96px;font-size:6.6px;color:#2a2a2a;"><i class="j">買</i><i class="j">高</i><i class="j">値</i></div>
<div class="t " style="left:444.2px;top:386.26px;font-size:6.6px;color:#2a2a2a;"><i class="j">買</i><i class="j">安</i><i class="j">値</i></div>
<div class="t " style="left:444.2px;top:399.56px;font-size:6.6px;color:#2a2a2a;"><i class="j">売</i><i class="j">高</i><i class="j">値</i></div>
<div class="t " style="left:444.2px;top:412.86px;font-size:6.6px;color:#2a2a2a;"><i class="j">売</i><i class="j">安</i><i class="j">値</i></div>
<div class="t " style="left:444.2px;top:426.16px;font-size:6.6px;color:#2a2a2a;"><i class="j">直</i><i class="j">近</i><i class="j">高</i><i class="j">値</i></div>
<div class="t " style="left:444.2px;top:439.46px;font-size:6.6px;color:#2a2a2a;"><i class="j">直</i><i class="j">近</i><i class="j">安</i><i class="j">値</i></div>
<div class="t " style="left:444.2px;top:452.76px;font-size:6.6px;color:#2a2a2a;"><i class="j">最</i><i class="j">大</i><i class="j">出</i><i class="j">来</i><i class="j">高</i></div>
<div class="t " style="left:444.2px;top:466.06px;font-size:6.6px;color:#2a2a2a;"><i class="j">最</i><i class="j">小</i><i class="j">出</i><i class="j">来</i><i class="j">高</i></div>
<div class="t " style="left:507.3px;top:372.96px;font-size:6.6px;color:#2a2a2a;"><i class="j">約</i><i class="j">定</i></div>
<div class="t " style="left:507.3px;top:386.26px;font-size:6.6px;color:#2a2a2a;"><i class="j">約</i><i class="j">定</i><i class="j">数</i><i class="j">量</i></div>
<div class="t " style="left:507.3px;top:399.56px;font-size:6.6px;color:#2a2a2a;"><i class="j">売</i><i class="j">上</i><i class="j">高</i></div>
<div class="t " style="left:507.3px;top:412.86px;font-size:6.6px;color:#2a2a2a;"><i class="j">取</i><i class="j">組</i><i class="j">高</i></div>
<div class="t " style="left:507.3px;top:426.16px;font-size:6.6px;color:#2a2a2a;"><i class="j">買</i><i class="k">い</i><i class="j">注</i><i class="j">文</i></div>
<div class="t " style="left:507.3px;top:439.46px;font-size:6.6px;color:#2a2a2a;"><i class="j">数</i><i class="j">量</i><i class="k">が</i><i class="j">制</i><i class="j">限</i><i class="k">に</i><i class="j">達</i><i class="k">し</i><i class="k">ま</i><i class="k">し</i><i class="k">た</i><i class="j">。</i></div>
<div class="t " style="left:507.3px;top:452.76px;font-size:6.6px;color:#2a2a2a;"><i class="j">売</i><i class="k">り</i><i class="j">注</i><i class="j">文</i></div>
<div class="t " style="left:507.3px;top:466.06px;font-size:6.6px;color:#2a2a2a;"><i class="j">売</i><i class="k">り</i><i class="j">数</i><i class="j">量</i></div>
<div class="t " style="left:507.3px;top:479.36px;font-size:6.6px;color:#2a2a2a;"><i class="j">新</i><i class="j">規</i><i class="j">建</i><i class="j">値</i></div>
<div class="t " style="left:507.3px;top:492.66px;font-size:6.6px;color:#2a2a2a;"><i class="j">決</i><i class="j">済</i><i class="j">値</i></div>
<div class="t " style="left:507.3px;top:505.96px;font-size:6.6px;color:#2a2a2a;"><i class="j">加</i><i class="j">重</i><i class="j">平</i><i class="j">均</i><i class="j">価</i><i class="j">格</i></div>
<div class="t " style="left:606.4px;top:372.96px;font-size:6.6px;color:#2a2a2a;"><i class="k">ボ</i><i class="k">ラ</i><i class="k">テ</i><i class="k">ィ</i><i class="k">リ</i><i class="k">テ</i><i class="k">ィ</i></div>
<div class="t " style="left:606.4px;top:386.26px;font-size:6.6px;color:#2a2a2a;"><i class="j">理</i><i class="j">論</i><i class="j">価</i><i class="j">格</i></div>
<div class="t " style="left:606.4px;top:399.56px;font-size:6.6px;color:#2a2a2a;"><i class="k">デ</i><i class="k">ル</i><i class="k">タ</i></div>
<div class="t " style="left:606.4px;top:412.86px;font-size:6.6px;color:#2a2a2a;"><i class="k">セ</i><i class="k">ー</i><i class="k">タ</i></div>
<div class="t " style="left:606.4px;top:426.16px;font-size:6.6px;color:#2a2a2a;"><i class="k">ガ</i><i class="k">ン</i><i class="k">マ</i></div>
<div class="t " style="left:606.4px;top:439.46px;font-size:6.6px;color:#2a2a2a;"><i class="k">ベ</i><i class="k">ガ</i></div>
<div class="t " style="left:606.4px;top:452.76px;font-size:6.6px;color:#2a2a2a;"><i class="k">ロ</i><i class="k">ー</i></div>
<div class="t " style="left:606.4px;top:466.06px;font-size:6.6px;color:#2a2a2a;"><i class="k">オ</i><i class="k">メ</i><i class="k">ガ</i></div>
<div class="t " style="left:606.4px;top:479.36px;font-size:6.6px;color:#2a2a2a;"><i class="j">感</i><i class="j">度</i></div>
<div class="r" style="left:150.3px;top:369.8px;width:132.4px;height:14.2px;background:#0a78d4;"></div>
<div class="t " style="left:167.6px;top:373.78px;font-size:6.9px;color:#fff;"><i class="j">表</i><i class="j">示</i><i class="j">列</i></div>
<svg class="r" style="left:277.5px;top:374.4px" width="4" height="5" viewBox="0 0 4 5"><path d="M0.5 0.5L3.5 2.5L0.5 4.5Z" fill="#fff"/></svg>
<div class="r" style="left:144.8px;top:365px;width:141.5px;height:24px;box-sizing:border-box;border:4.3px solid #ef9229;border-radius:12px;"></div>
<div class="r" style="left:283.7px;top:408.6px;width:65.7px;height:13.8px;background:#0a78d4;"></div>
<div class="t " style="left:300.4px;top:412.56px;font-size:6.6px;color:#fff;"><i class="k">ス</i><i class="k">プ</i><i class="k">レ</i><i class="k">ッ</i><i class="k">ド</i></div>
<div class="r" style="left:275.8px;top:402px;width:79.9px;height:26.3px;box-sizing:border-box;border:4.5px solid #ef9229;border-radius:13px;"></div>
<svg class="r" style="left:0;top:0" width="755" height="547" viewBox="0 0 755 547"><path d="M215.5 389.5Q221 406 248.2 408.6L248.2 404.1L272.9 417.2L250.2 435.3L250.2 429.3Q215 428 215.5 389.5Z" fill="#ea982e"/></svg>
</body></html>
